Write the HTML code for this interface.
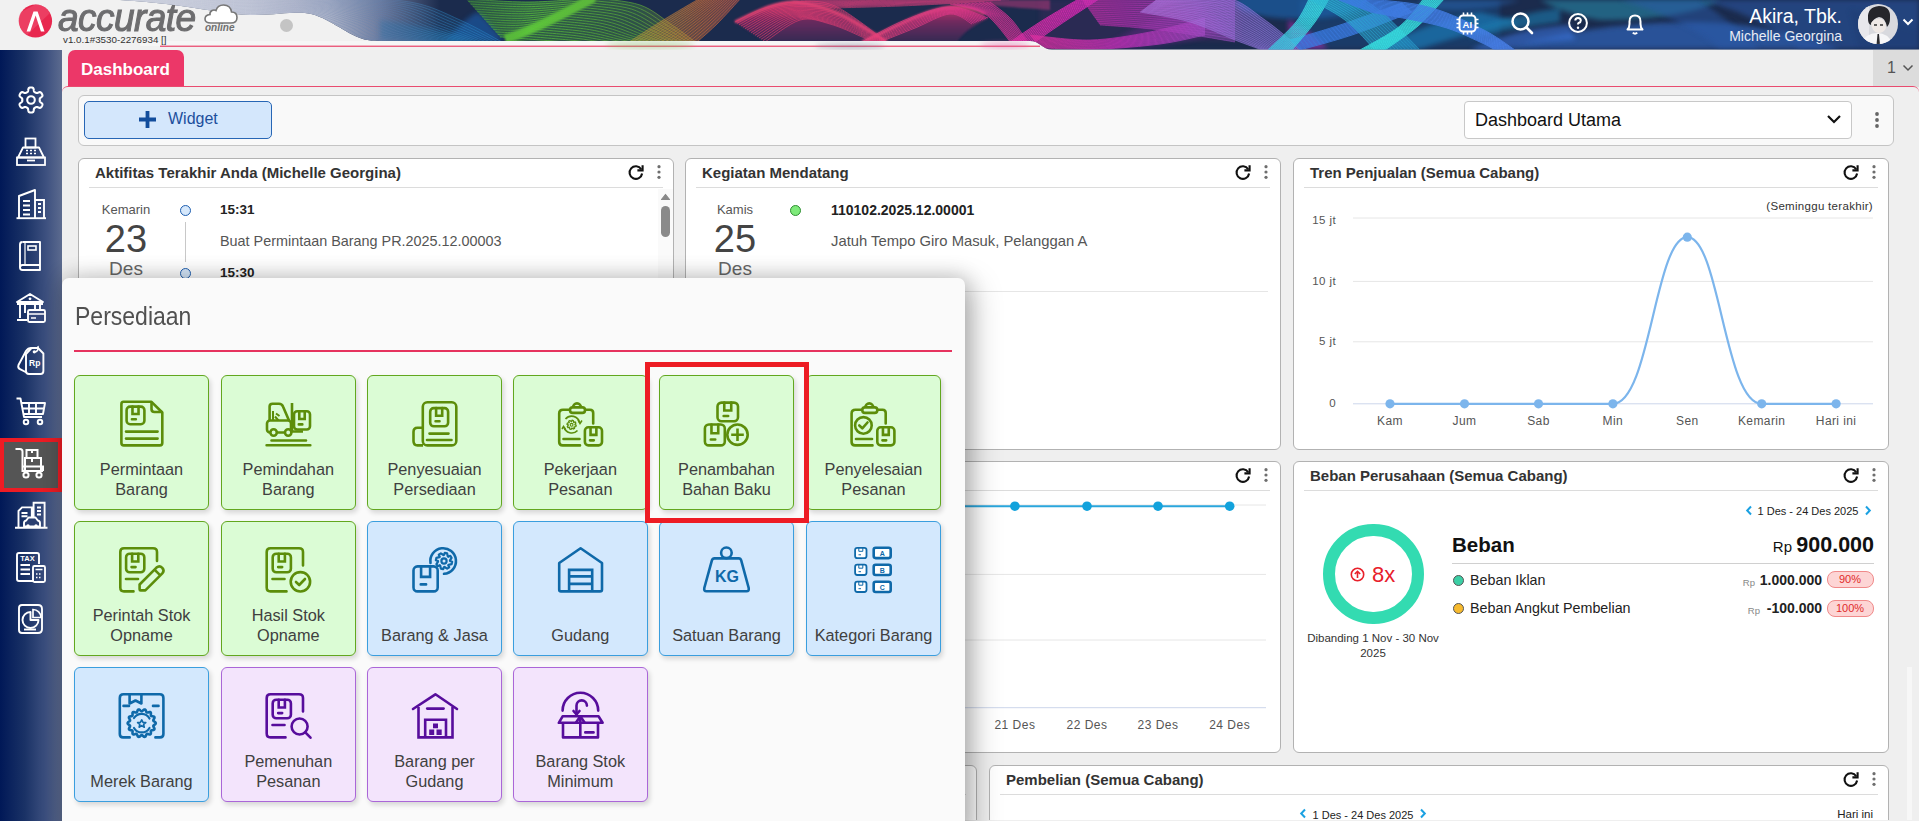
<!DOCTYPE html>
<html><head><meta charset="utf-8">
<style>
*{margin:0;padding:0;box-sizing:border-box}
html,body{width:1919px;height:821px;overflow:hidden;background:#efefef;font-family:"Liberation Sans",sans-serif;color:#333}
body{position:relative}
.a{position:absolute}
.t{white-space:nowrap;line-height:normal}
.card{position:absolute;background:#fff;border:1px solid #b2b2b2;border-radius:6px}
.tile{position:absolute;width:135px;height:135px;border-radius:6px;border:1px solid;box-shadow:2px 3px 5px rgba(0,0,0,.14)}
.tile.g{background:#dbfcd5;border-color:#62a71f}
.tile.b{background:#d3e8fd;border-color:#3a9ede}
.tile.p{background:#f3e4fc;border-color:#aa66d8}
.tl{position:absolute;left:0;right:0;text-align:center;font-size:16.3px;line-height:20px;color:#404040;white-space:nowrap}
</style></head><body>
<svg class="a" style="left:0;top:0" width="1919" height="50" viewBox="0 0 1919 50">
<defs><linearGradient id="lav" x1="120" y1="0" x2="440" y2="0" gradientUnits="userSpaceOnUse"><stop offset="0" stop-color="#eeeff3"/><stop offset="0.4" stop-color="#dcdfe8"/><stop offset="0.65" stop-color="#b3b9cc"/><stop offset="0.82" stop-color="#6c789a"/><stop offset="1" stop-color="#1b2b4d"/></linearGradient><linearGradient id="gA" x1="120" y1="0" x2="510" y2="0" gradientUnits="userSpaceOnUse"><stop offset="0" stop-color="#c0c5d5"/><stop offset="0.45" stop-color="#9aa3c0"/><stop offset="0.7" stop-color="#5a7aa8"/><stop offset="0.85" stop-color="#2a84c0"/><stop offset="1" stop-color="#2a8ad0"/></linearGradient><linearGradient id="gB" x1="450" y1="0" x2="720" y2="0" gradientUnits="userSpaceOnUse"><stop offset="0" stop-color="#3f8a3a"/><stop offset="0.3" stop-color="#5cc83a"/><stop offset="0.7" stop-color="#5aa83a"/><stop offset="1" stop-color="#b08a3a"/></linearGradient><linearGradient id="gC" x1="620" y1="0" x2="820" y2="0" gradientUnits="userSpaceOnUse"><stop offset="0" stop-color="#a8a03a"/><stop offset="0.4" stop-color="#d0703a"/><stop offset="1" stop-color="#e0406a"/></linearGradient><linearGradient id="gD" x1="720" y1="0" x2="920" y2="0" gradientUnits="userSpaceOnUse"><stop offset="0" stop-color="#e83a6a"/><stop offset="1" stop-color="#e0407a"/></linearGradient><linearGradient id="gE" x1="760" y1="0" x2="1060" y2="0" gradientUnits="userSpaceOnUse"><stop offset="0" stop-color="#d83a6e"/><stop offset="0.6" stop-color="#d8407a"/><stop offset="1" stop-color="#c03a90"/></linearGradient><linearGradient id="gF" x1="880" y1="0" x2="1020" y2="0" gradientUnits="userSpaceOnUse"><stop offset="0" stop-color="#e8407a"/><stop offset="1" stop-color="#d8309a"/></linearGradient><linearGradient id="gG" x1="990" y1="0" x2="1100" y2="0" gradientUnits="userSpaceOnUse"><stop offset="0" stop-color="#e030a0"/><stop offset="1" stop-color="#d028b8"/></linearGradient><linearGradient id="gH" x1="1030" y1="0" x2="1220" y2="0" gradientUnits="userSpaceOnUse"><stop offset="0" stop-color="#e030a0"/><stop offset="0.5" stop-color="#c030b8"/><stop offset="1" stop-color="#a050c8"/></linearGradient><linearGradient id="gI" x1="1170" y1="0" x2="1330" y2="0" gradientUnits="userSpaceOnUse"><stop offset="0" stop-color="#a870d8"/><stop offset="1" stop-color="#7a78e0"/></linearGradient><linearGradient id="gJ" x1="1260" y1="0" x2="1330" y2="0" gradientUnits="userSpaceOnUse"><stop offset="0" stop-color="#40c0e0"/><stop offset="1" stop-color="#38e0e0"/></linearGradient><linearGradient id="gK" x1="1300" y1="0" x2="1410" y2="0" gradientUnits="userSpaceOnUse"><stop offset="0" stop-color="#30c0d8"/><stop offset="1" stop-color="#2898c8"/></linearGradient><linearGradient id="gM" x1="1330" y1="0" x2="1520" y2="0" gradientUnits="userSpaceOnUse"><stop offset="0" stop-color="#3a7ae0"/><stop offset="1" stop-color="#4a80e8"/></linearGradient><linearGradient id="vh1" x1="0" y1="0" x2="0" y2="1"><stop offset="0" stop-color="#d83a70"/><stop offset=".45" stop-color="#7a2a62"/><stop offset="1" stop-color="#3a2a55"/></linearGradient><filter id="b1" x="-10%" y="-60%" width="120%" height="220%"><feGaussianBlur stdDeviation="1"/></filter><filter id="b2" x="-10%" y="-60%" width="120%" height="220%"><feGaussianBlur stdDeviation="2.5"/></filter><filter id="b3" x="-20%" y="-100%" width="140%" height="300%"><feGaussianBlur stdDeviation="4"/></filter><clipPath id="hc"><path d="M120 0C180 3 220 14 250 15C275 15 290 12 305 13C325 15 340 30 360 38C368 41 375 41 395 41L1030 41C1040 41 1042 49.5 1052 49.5L1919 49.5L1919 0Z"/></clipPath><clipPath id="hc2"><rect x="120" y="0" width="1799" height="50"/></clipPath></defs>
<rect x="0" y="0" width="1919" height="50" fill="#f1f1f1"/>
<rect x="140" y="41" width="900" height="5" fill="#f6f6f6"/>
<rect x="160" y="45.6" width="880" height="1.3" fill="#ea4f73"/>
<g clip-path="url(#hc)">
<rect x="120" y="0" width="1799" height="50" fill="#1b2b4d"/>
<rect x="120" y="0" width="320" height="50" fill="url(#lav)"/>
<path d="M445 41C458 28 468 16 478 12C488 20 496 32 505 41Z" fill="#1f60b0" opacity="0.6" filter="url(#b2)"/>
<path d="M380 41L380 20C420 25 450 32 480 41Z" fill="#246fa8" opacity="0.45" filter="url(#b2)"/>
<path d="M1040 0L1240 0L1240 41L1040 41Z" fill="#5a2a6a" opacity="0.25" filter="url(#b2)"/>
<path d="M1100 49C1130 30 1160 15 1200 5L1230 30C1200 40 1150 49 1100 49Z" fill="#6a2a8a" opacity="0.45" filter="url(#b2)"/>
<path d="M1300 0L1500 0L1500 49L1300 49Z" fill="#1f5a9a" opacity="0.35" filter="url(#b2)"/>
<path d="M1380 49C1400 35 1440 20 1480 12L1520 22C1480 30 1440 42 1420 49Z" fill="#1f8ac8" opacity="0.55" filter="url(#b2)"/>
<path d="M1420 0L1520 0C1490 10 1460 12 1420 8Z" fill="#2a6ab8" opacity="0.45" filter="url(#b2)"/>
<path d="M1470 30C1500 20 1530 12 1560 8L1560 22C1530 26 1500 32 1470 38Z" fill="#1a8ac0" opacity="0.5" filter="url(#b2)"/>
<path d="M1540 0L1720 0C1700 12 1660 20 1600 20C1570 15 1555 8 1540 0Z" fill="#2a9ab8" opacity="0.5" filter="url(#b2)"/>
<path d="M1500 49C1560 32 1620 22 1700 22C1760 24 1800 35 1840 49Z" fill="#3268c0" opacity="0.65" filter="url(#b2)"/>
<path d="M1620 0L1700 0C1720 15 1740 30 1760 49L1720 49C1700 30 1660 12 1620 0Z" fill="#2a5aa8" opacity="0.5" filter="url(#b2)"/>
<path d="M1700 0L1919 0L1919 49L1800 49C1780 30 1740 10 1700 0Z" fill="#2a55a0" opacity="0.6" filter="url(#b2)"/>
<path d="M1850 10C1880 15 1900 25 1919 30L1919 49L1860 49Z" fill="#1e3a70" opacity="0.4" filter="url(#b2)"/>
<path d="M505 39C530 32 560 15 594 -2" stroke="#62c83a" stroke-width="9" opacity=".9" fill="none" filter="url(#b1)"/>
<path d="M735 22C760 10 775 2 795 2C830 4 860 25 887 42L765 42C755 35 745 28 735 22Z" fill="url(#vh1)" opacity=".85" filter="url(#b1)"/>
<path d="M862 42C890 30 922 10 950 7C968 6 978 12 988 18C972 26 962 34 957 42Z" fill="url(#vh1)" opacity=".85" filter="url(#b1)"/>
<path d="M790 0L1050 0L1050 10C990 6 960 2 930 3C880 6 850 8 800 6Z" fill="#b03878" opacity=".55" filter="url(#b1)"/>
<path d="M735 22C760 10 775 2 795 2C830 4 860 25 887 42" stroke="#ee4a78" stroke-width="3" fill="none" opacity=".85" filter="url(#b1)"/>
<path d="M862 42C890 30 922 10 950 7C968 6 978 10 985 14" stroke="#ee4a80" stroke-width="3" fill="none" opacity=".85" filter="url(#b1)"/>
<ellipse cx="1300" cy="3" rx="65" ry="16" fill="#1a68b4" opacity=".6" filter="url(#b2)"/>
<path d="M1288 20C1300 25 1315 35 1328 49L1290 49Z" fill="#c02ab8" opacity=".55" filter="url(#b2)"/>
<path d="M1470 50C1500 35 1530 28 1570 25L1575 40C1540 42 1510 46 1500 50Z" fill="#3a72d8" opacity=".6" filter="url(#b2)"/>
<path d="M120.0 -3.0C140.0 -2.8 205.0 -2.2 240.0 -2.0C275.0 -1.8 301.7 -2.7 330.0 -2.0C358.3 -1.3 388.3 -1.7 410.0 2.0C431.7 5.7 444.7 13.3 460.0 20.0C475.3 26.7 495.0 38.3 502.0 42.0L420.0 42.0C410.8 41.7 378.3 42.3 365.0 40.0C351.7 37.7 350.8 32.5 340.0 28.0C329.2 23.5 316.7 15.3 300.0 13.0C283.3 10.7 270.0 15.7 240.0 14.0C210.0 12.3 140.0 4.8 120.0 3.0Z" fill="url(#gA)" opacity="0.15"/><g fill="none" stroke="url(#gA)" stroke-width="0.8" opacity="0.6"><path d="M120.0 -3.0C140.0 -2.8 205.0 -2.2 240.0 -2.0C275.0 -1.8 301.7 -2.7 330.0 -2.0C358.3 -1.3 388.3 -1.7 410.0 2.0C431.7 5.7 444.7 13.3 460.0 20.0C475.3 26.7 495.0 38.3 502.0 42.0"/><path d="M120.0 -2.7C140.0 -2.5 205.2 -1.5 240.0 -1.2C274.8 -1.0 300.8 -2.0 328.6 -1.3C356.3 -0.5 385.5 -0.5 406.7 3.2C427.8 6.9 440.2 14.5 455.5 21.0C470.7 27.4 491.0 38.5 498.1 42.0"/><path d="M120.0 -2.4C140.0 -2.1 205.5 -0.8 240.0 -0.5C274.5 -0.2 299.9 -1.4 327.1 -0.6C354.4 0.3 382.7 0.7 403.3 4.5C424.0 8.2 435.8 15.7 451.0 21.9C466.1 28.2 487.0 38.7 494.2 42.0"/><path d="M120.0 -2.1C140.0 -1.7 205.7 -0.1 240.0 0.3C274.3 0.7 299.0 -0.8 325.7 0.1C352.4 1.0 379.9 1.9 400.0 5.7C420.1 9.5 431.4 16.8 446.4 22.9C461.5 28.9 483.0 38.8 490.3 42.0"/><path d="M120.0 -1.9C140.0 -1.4 206.0 0.6 240.0 1.0C274.0 1.5 298.2 -0.1 324.3 0.9C350.4 1.8 377.1 3.1 396.7 7.0C416.3 10.8 427.0 18.0 441.9 23.8C456.9 29.7 479.0 39.0 486.4 42.0"/><path d="M120.0 -1.6C140.0 -1.0 206.2 1.3 240.0 1.8C273.8 2.3 297.3 0.5 322.9 1.6C348.4 2.6 374.2 4.3 393.3 8.2C412.4 12.1 422.5 19.1 437.4 24.8C452.2 30.4 475.0 39.1 482.5 42.0"/><path d="M120.0 -1.3C140.0 -0.6 206.4 2.0 240.0 2.6C273.6 3.2 296.4 1.1 321.4 2.3C346.4 3.4 371.4 5.5 390.0 9.4C408.6 13.3 418.1 20.3 432.9 25.7C447.6 31.1 471.0 39.3 478.6 42.0"/><path d="M120.0 -1.0C140.0 -0.3 206.7 2.7 240.0 3.3C273.3 4.0 295.6 1.8 320.0 3.0C344.4 4.2 368.6 6.7 386.7 10.7C404.7 14.6 413.7 21.4 428.3 26.7C443.0 31.9 466.9 39.4 474.7 42.0"/><path d="M120.0 -0.7C140.0 0.1 206.9 3.4 240.0 4.1C273.1 4.8 294.7 2.4 318.6 3.7C342.5 5.0 365.8 7.9 383.3 11.9C400.9 15.9 409.2 22.6 423.8 27.6C438.4 32.6 462.9 39.6 470.8 42.0"/><path d="M120.0 -0.4C140.0 0.5 207.1 4.0 240.0 4.9C272.9 5.7 293.8 3.0 317.1 4.4C340.5 5.8 363.0 9.1 380.0 13.1C397.0 17.2 404.8 23.8 419.3 28.6C433.8 33.4 458.9 39.8 466.9 42.0"/><path d="M120.0 -0.1C140.0 0.8 207.4 4.7 240.0 5.6C272.6 6.5 292.9 3.7 315.7 5.1C338.5 6.6 360.2 10.3 376.7 14.4C393.2 18.4 400.4 24.9 414.8 29.5C429.1 34.1 454.9 39.9 463.0 42.0"/><path d="M120.0 0.1C140.0 1.2 207.6 5.4 240.0 6.4C272.4 7.3 292.1 4.3 314.3 5.9C336.5 7.4 357.3 11.5 373.3 15.6C389.3 19.7 396.0 26.1 410.2 30.5C424.5 34.9 450.9 40.1 459.0 42.0"/><path d="M120.0 0.4C140.0 1.5 207.9 6.1 240.0 7.1C272.1 8.2 291.2 5.0 312.9 6.6C334.5 8.2 354.5 12.7 370.0 16.9C385.5 21.0 391.5 27.2 405.7 31.4C419.9 35.6 446.9 40.2 455.1 42.0"/><path d="M120.0 0.7C140.0 1.9 208.1 6.8 240.0 7.9C271.9 9.0 290.3 5.6 311.4 7.3C332.5 9.0 351.7 13.9 366.7 18.1C381.6 22.3 387.1 28.4 401.2 32.4C415.3 36.4 442.9 40.4 451.2 42.0"/><path d="M120.0 1.0C140.0 2.3 208.3 7.5 240.0 8.7C271.7 9.8 289.4 6.2 310.0 8.0C330.6 9.8 348.9 15.1 363.3 19.3C377.8 23.6 382.7 29.6 396.7 33.3C410.7 37.1 438.9 40.6 447.3 42.0"/><path d="M120.0 1.3C140.0 2.6 208.6 8.2 240.0 9.4C271.4 10.7 288.6 6.9 308.6 8.7C328.6 10.6 346.1 16.3 360.0 20.6C373.9 24.8 378.2 30.7 392.1 34.3C406.0 37.9 434.9 40.7 443.4 42.0"/><path d="M120.0 1.6C140.0 3.0 208.8 8.9 240.0 10.2C271.2 11.5 287.7 7.5 307.1 9.4C326.6 11.4 343.3 17.5 356.7 21.8C370.1 26.1 373.8 31.9 387.6 35.2C401.4 38.6 430.9 40.9 439.5 42.0"/><path d="M120.0 1.9C140.0 3.4 209.0 9.6 240.0 11.0C271.0 12.3 286.8 8.1 305.7 10.1C324.6 12.2 340.4 18.7 353.3 23.0C366.2 27.4 369.4 33.0 383.1 36.2C396.8 39.3 426.9 41.0 435.6 42.0"/><path d="M120.0 2.1C140.0 3.7 209.3 10.3 240.0 11.7C270.7 13.2 286.0 8.8 304.3 10.9C322.6 13.0 337.6 19.9 350.0 24.3C362.4 28.7 365.0 34.2 378.6 37.1C392.2 40.1 422.9 41.2 431.7 42.0"/><path d="M120.0 2.4C140.0 4.1 209.5 11.0 240.0 12.5C270.5 14.0 285.1 9.4 302.9 11.6C320.6 13.7 334.8 21.1 346.7 25.5C358.5 29.9 360.5 35.3 374.0 38.1C387.6 40.8 418.8 41.3 427.8 42.0"/><path d="M120.0 2.7C140.0 4.5 209.8 11.6 240.0 13.2C270.2 14.8 284.2 10.0 301.4 12.3C318.7 14.5 332.0 22.3 343.3 26.8C354.7 31.2 356.1 36.5 369.5 39.0C383.0 41.6 414.8 41.5 423.9 42.0"/><path d="M120.0 3.0C140.0 4.8 210.0 12.3 240.0 14.0C270.0 15.7 283.3 10.7 300.0 13.0C316.7 15.3 329.2 23.5 340.0 28.0C350.8 32.5 351.7 37.7 365.0 40.0C378.3 42.3 410.8 41.7 420.0 42.0"/></g>
<path d="M466.0 -1.0C476.7 -0.5 508.7 2.2 530.0 2.0C551.3 1.8 583.3 -1.3 594.0 -2.0L528.0 32.0C525.7 32.8 518.7 36.2 514.0 37.0C509.3 37.8 502.3 37.0 500.0 37.0Z" fill="url(#gB)" opacity="0.35"/><g fill="none" stroke="url(#gB)" stroke-width="0.9" opacity="0.75"><path d="M466.0 -1.0C476.7 -0.5 508.7 2.2 530.0 2.0C551.3 1.8 583.3 -1.3 594.0 -2.0"/><path d="M468.3 1.5C478.4 2.0 508.7 4.5 528.9 4.3C549.2 4.1 579.5 0.9 589.6 0.3"/><path d="M470.5 4.1C480.1 4.5 508.8 6.9 527.9 6.7C547.0 6.4 575.6 3.2 585.2 2.5"/><path d="M472.8 6.6C481.8 7.0 508.8 9.3 526.8 9.0C544.8 8.7 571.8 5.5 580.8 4.8"/><path d="M475.1 9.1C483.5 9.5 508.8 11.7 525.7 11.3C542.6 11.0 568.0 7.8 576.4 7.1"/><path d="M477.3 11.7C485.2 12.0 508.9 14.1 524.7 13.7C540.4 13.3 564.1 10.1 572.0 9.3"/><path d="M479.6 14.2C486.9 14.5 508.9 16.4 523.6 16.0C538.3 15.6 560.3 12.3 567.6 11.6"/><path d="M481.9 16.7C488.6 17.0 509.0 18.8 522.5 18.3C536.1 17.9 556.4 14.6 563.2 13.9"/><path d="M484.1 19.3C490.4 19.5 509.0 21.2 521.5 20.7C533.9 20.1 552.6 16.9 558.8 16.1"/><path d="M486.4 21.8C492.1 22.0 509.1 23.6 520.4 23.0C531.7 22.4 548.7 19.2 554.4 18.4"/><path d="M488.7 24.3C493.8 24.5 509.1 25.9 519.3 25.3C529.6 24.7 544.9 21.4 550.0 20.7"/><path d="M490.9 26.9C495.5 27.0 509.2 28.3 518.3 27.7C527.4 27.0 541.0 23.7 545.6 22.9"/><path d="M493.2 29.4C497.2 29.5 509.2 30.7 517.2 30.0C525.2 29.3 537.2 26.0 541.2 25.2"/><path d="M495.5 31.9C498.9 32.0 509.2 33.1 516.1 32.3C523.0 31.6 533.4 28.3 536.8 27.5"/><path d="M497.7 34.5C500.6 34.5 509.3 35.5 515.1 34.7C520.8 33.9 529.5 30.6 532.4 29.7"/><path d="M500.0 37.0C502.3 37.0 509.3 37.8 514.0 37.0C518.7 36.2 525.7 32.8 528.0 32.0"/></g>
<path d="M594.0 -2.0C601.7 -0.8 627.0 0.5 640.0 5.0C653.0 9.5 661.7 18.0 672.0 25.0C682.3 32.0 697.0 43.3 702.0 47.0L640.0 49.0C633.3 48.7 613.3 47.8 600.0 47.0C586.7 46.2 575.3 45.2 560.0 44.0C544.7 42.8 516.7 40.7 508.0 40.0Z" fill="url(#gB)" opacity="0.3"/><g fill="none" stroke="url(#gB)" stroke-width="0.9" opacity="0.75"><path d="M594.0 -2.0C601.7 -0.8 627.0 0.5 640.0 5.0C653.0 9.5 661.7 18.0 672.0 25.0C682.3 32.0 697.0 43.3 702.0 47.0"/><path d="M589.5 0.2C597.2 1.4 622.7 2.7 635.8 7.1C648.9 11.4 657.7 19.5 668.2 26.2C678.7 32.8 693.6 43.6 698.7 47.1"/><path d="M584.9 2.4C592.7 3.5 618.3 5.0 631.6 9.1C644.8 13.3 653.8 21.0 664.4 27.3C675.1 33.7 690.3 43.9 695.5 47.2"/><path d="M580.4 4.6C588.2 5.7 614.0 7.2 627.4 11.2C640.7 15.1 649.8 22.4 660.6 28.5C671.4 34.5 686.9 44.2 692.2 47.3"/><path d="M575.9 6.8C583.8 7.9 609.7 9.4 623.2 13.2C636.6 17.0 645.9 23.9 656.8 29.6C667.8 35.3 683.6 44.5 688.9 47.4"/><path d="M571.4 9.1C579.3 10.1 605.3 11.6 618.9 15.3C632.6 18.9 641.9 25.4 653.1 30.8C664.2 36.2 680.2 44.7 685.7 47.5"/><path d="M566.8 11.3C574.8 12.3 601.0 13.9 614.7 17.3C628.5 20.8 638.0 26.9 649.3 31.9C660.5 37.0 676.9 45.0 682.4 47.6"/><path d="M562.3 13.5C570.4 14.5 596.7 16.1 610.5 19.4C624.4 22.6 634.0 28.4 645.5 33.1C656.9 37.8 673.5 45.3 679.2 47.7"/><path d="M557.8 15.7C565.9 16.6 592.3 18.3 606.3 21.4C620.3 24.5 630.1 29.9 641.7 34.3C653.3 38.7 670.2 45.6 675.9 47.8"/><path d="M553.3 17.9C561.4 18.8 588.0 20.6 602.1 23.5C616.2 26.4 626.1 31.3 637.9 35.4C649.6 39.5 666.8 45.9 672.6 47.9"/><path d="M548.7 20.1C556.9 21.0 583.7 22.8 597.9 25.5C612.1 28.3 622.2 32.8 634.1 36.6C646.0 40.3 663.5 46.1 669.4 48.1"/><path d="M544.2 22.3C552.5 23.2 579.3 25.0 593.7 27.6C608.0 30.1 618.2 34.3 630.3 37.7C642.4 41.2 660.1 46.4 666.1 48.2"/><path d="M539.7 24.5C548.0 25.4 575.0 27.2 589.5 29.6C603.9 32.0 614.3 35.8 626.5 38.9C638.8 42.0 656.8 46.7 662.8 48.3"/><path d="M535.2 26.7C543.5 27.6 570.7 29.5 585.3 31.7C599.9 33.9 610.4 37.3 622.7 40.1C635.1 42.8 653.4 47.0 659.6 48.4"/><path d="M530.6 28.9C539.0 29.7 566.3 31.7 581.1 33.7C595.8 35.8 606.4 38.8 618.9 41.2C631.5 43.7 650.1 47.3 656.3 48.5"/><path d="M526.1 31.2C534.6 31.9 562.0 33.9 576.8 35.8C591.7 37.7 602.5 40.2 615.2 42.4C627.9 44.5 646.7 47.5 653.1 48.6"/><path d="M521.6 33.4C530.1 34.1 557.7 36.1 572.6 37.8C587.6 39.5 598.5 41.7 611.4 43.5C624.2 45.3 643.4 47.8 649.8 48.7"/><path d="M517.1 35.6C525.6 36.3 553.3 38.4 568.4 39.9C583.5 41.4 594.6 43.2 607.6 44.7C620.6 46.2 640.0 48.1 646.5 48.8"/><path d="M512.5 37.8C521.1 38.5 549.0 40.6 564.2 41.9C579.4 43.3 590.6 44.7 603.8 45.8C617.0 47.0 636.7 48.4 643.3 48.9"/><path d="M508.0 40.0C516.7 40.7 544.7 42.8 560.0 44.0C575.3 45.2 586.7 46.2 600.0 47.0C613.3 47.8 633.3 48.7 640.0 49.0"/></g>
<path d="M620.0 48.0C626.7 43.7 646.3 30.5 660.0 22.0C673.7 13.5 695.0 1.2 702.0 -3.0L742.0 -3.0C737.7 1.7 724.7 16.5 716.0 25.0C707.3 33.5 694.3 44.2 690.0 48.0Z" fill="url(#gC)" opacity="0.4"/><g fill="none" stroke="url(#gC)" stroke-width="0.8" opacity="0.7"><path d="M620.0 48.0C626.7 43.7 646.3 30.5 660.0 22.0C673.7 13.5 695.0 1.2 702.0 -3.0"/><path d="M624.1 48.0C630.6 43.7 649.9 30.7 663.3 22.2C676.7 13.7 697.5 1.2 704.4 -3.0"/><path d="M628.2 48.0C634.6 43.7 653.5 30.9 666.6 22.4C679.7 13.9 700.0 1.2 706.7 -3.0"/><path d="M632.4 48.0C638.6 43.8 657.1 31.0 669.9 22.5C682.7 14.0 702.5 1.3 709.1 -3.0"/><path d="M636.5 48.0C642.6 43.8 660.7 31.2 673.2 22.7C685.7 14.2 705.0 1.3 711.4 -3.0"/><path d="M640.6 48.0C646.6 43.8 664.3 31.4 676.5 22.9C688.7 14.4 707.5 1.3 713.8 -3.0"/><path d="M644.7 48.0C650.5 43.8 667.9 31.6 679.8 23.1C691.7 14.6 710.1 1.3 716.1 -3.0"/><path d="M648.8 48.0C654.5 43.9 671.5 31.7 683.1 23.2C694.7 14.7 712.6 1.4 718.5 -3.0"/><path d="M652.9 48.0C658.5 43.9 675.0 31.9 686.4 23.4C697.7 14.9 715.1 1.4 720.8 -3.0"/><path d="M657.1 48.0C662.5 43.9 678.6 32.1 689.6 23.6C700.7 15.1 717.6 1.4 723.2 -3.0"/><path d="M661.2 48.0C666.5 44.0 682.2 32.3 692.9 23.8C703.7 15.3 720.1 1.5 725.5 -3.0"/><path d="M665.3 48.0C670.5 44.0 685.8 32.4 696.2 23.9C706.7 15.4 722.6 1.5 727.9 -3.0"/><path d="M669.4 48.0C674.4 44.0 689.4 32.6 699.5 24.1C709.7 15.6 725.1 1.5 730.2 -3.0"/><path d="M673.5 48.0C678.4 44.0 693.0 32.8 702.8 24.3C712.7 15.8 727.6 1.5 732.6 -3.0"/><path d="M677.6 48.0C682.4 44.1 696.6 33.0 706.1 24.5C715.7 16.0 730.1 1.6 734.9 -3.0"/><path d="M681.8 48.0C686.4 44.1 700.2 33.1 709.4 24.6C718.7 16.1 732.6 1.6 737.3 -3.0"/><path d="M685.9 48.0C690.4 44.1 703.7 33.3 712.7 24.8C721.7 16.3 735.2 1.6 739.6 -3.0"/><path d="M690.0 48.0C694.3 44.2 707.3 33.5 716.0 25.0C724.7 16.5 737.7 1.7 742.0 -3.0"/></g>
<g fill="none" stroke="url(#gD)" stroke-width="0.8" opacity="0.8"><path d="M735.0 22.0C739.5 19.8 752.0 12.3 762.0 9.0C772.0 5.7 782.8 2.5 795.0 2.0C807.2 1.5 819.7 -0.7 835.0 6.0C850.3 12.7 878.3 36.0 887.0 42.0"/><path d="M737.0 23.3C741.6 21.1 754.5 13.0 764.5 9.7C774.6 6.4 785.3 3.8 797.3 3.5C809.4 3.2 821.9 1.6 836.7 8.0C851.4 14.4 877.7 36.3 885.9 42.0"/><path d="M739.0 24.7C743.7 22.3 757.0 13.8 767.1 10.5C777.2 7.2 787.8 5.0 799.7 4.9C811.5 4.9 824.2 3.8 838.3 10.0C852.5 16.2 877.0 36.7 884.7 42.0"/><path d="M741.0 26.0C745.8 23.5 759.4 14.5 769.6 11.2C779.8 7.9 790.3 6.3 802.0 6.4C813.7 6.5 826.4 6.1 840.0 12.0C853.6 17.9 876.3 37.0 883.6 42.0"/><path d="M743.0 27.3C747.9 24.8 761.9 15.2 772.1 11.9C782.4 8.7 792.7 7.5 804.3 7.9C815.9 8.2 828.6 8.3 841.7 14.0C854.7 19.7 875.7 37.3 882.5 42.0"/><path d="M745.0 28.7C749.9 26.0 764.4 15.9 774.7 12.7C784.9 9.4 795.2 8.8 806.7 9.3C818.1 9.9 830.9 10.6 843.3 16.0C855.8 21.4 875.0 37.7 881.3 42.0"/><path d="M747.0 30.0C752.0 27.2 766.9 16.6 777.2 13.4C787.5 10.2 797.7 10.0 809.0 10.8C820.3 11.6 833.1 12.8 845.0 18.0C856.9 23.2 874.3 38.0 880.2 42.0"/><path d="M749.0 31.3C754.1 28.5 769.3 17.3 779.7 14.1C790.1 11.0 800.2 11.3 811.3 12.3C822.5 13.2 835.4 15.0 846.7 20.0C858.0 25.0 873.7 38.3 879.1 42.0"/><path d="M751.0 32.7C756.2 29.7 771.8 18.0 782.3 14.9C792.7 11.7 802.7 12.5 813.7 13.7C824.7 14.9 837.6 17.3 848.3 22.0C859.0 26.7 873.0 38.7 877.9 42.0"/><path d="M753.0 34.0C758.3 30.9 774.3 18.7 784.8 15.6C795.3 12.5 805.1 13.8 816.0 15.2C826.9 16.6 839.9 19.5 850.0 24.0C860.1 28.5 872.3 39.0 876.8 42.0"/><path d="M755.0 35.3C760.4 32.2 776.8 19.4 787.3 16.3C797.9 13.2 807.6 15.1 818.3 16.7C829.1 18.3 842.1 21.8 851.7 26.0C861.2 30.2 871.7 39.3 875.7 42.0"/><path d="M757.0 36.7C762.5 33.4 779.3 20.2 789.9 17.1C800.5 14.0 810.1 16.3 820.7 18.1C831.2 20.0 844.4 24.0 853.3 28.0C862.3 32.0 871.0 39.7 874.5 42.0"/><path d="M759.0 38.0C764.6 34.6 781.7 20.9 792.4 17.8C803.1 14.7 812.6 17.6 823.0 19.6C833.4 21.6 846.6 26.3 855.0 30.0C863.4 33.7 870.3 40.0 873.4 42.0"/><path d="M761.0 39.3C766.7 35.9 784.2 21.6 794.9 18.5C805.7 15.5 815.0 18.8 825.3 21.1C835.6 23.3 848.8 28.5 856.7 32.0C864.5 35.5 869.7 40.3 872.3 42.0"/><path d="M763.0 40.7C768.7 37.1 786.7 22.3 797.5 19.3C808.2 16.2 817.5 20.1 827.7 22.5C837.8 25.0 851.1 30.8 858.3 34.0C865.6 37.2 869.0 40.7 871.1 42.0"/><path d="M765.0 42.0C770.8 38.3 789.2 23.0 800.0 20.0C810.8 17.0 820.0 21.3 830.0 24.0C840.0 26.7 853.3 33.0 860.0 36.0C866.7 39.0 868.3 41.0 870.0 42.0"/></g>
<g fill="none" stroke="url(#gF)" stroke-width="0.9" opacity="0.8"><path d="M862.0 42.0C869.2 38.3 890.3 25.8 905.0 20.0C919.7 14.2 936.2 7.3 950.0 7.0C963.8 6.7 981.7 16.2 988.0 18.0"/><path d="M864.0 42.0C871.0 38.5 891.8 26.6 906.1 20.9C920.4 15.2 936.6 8.1 950.0 7.8C963.4 7.4 980.2 16.9 986.2 18.7"/><path d="M866.0 42.0C872.9 38.6 893.2 27.4 907.2 21.8C921.2 16.2 937.1 9.0 950.0 8.6C962.9 8.1 978.7 17.5 984.4 19.3"/><path d="M868.0 42.0C874.7 38.8 894.7 28.1 908.3 22.7C922.0 17.2 937.6 9.8 950.0 9.3C962.4 8.9 977.2 18.2 982.7 20.0"/><path d="M870.0 42.0C876.6 38.9 896.1 28.9 909.4 23.6C922.8 18.2 938.1 10.6 950.0 10.1C961.9 9.6 975.7 18.9 980.9 20.7"/><path d="M872.0 42.0C878.4 39.1 897.6 29.6 910.6 24.4C923.6 19.3 938.6 11.4 950.0 10.9C961.4 10.4 974.3 19.6 979.1 21.3"/><path d="M874.0 42.0C880.3 39.2 899.0 30.4 911.7 25.3C924.3 20.3 939.1 12.2 950.0 11.7C960.9 11.1 972.8 20.3 977.3 22.0"/><path d="M876.0 42.0C882.1 39.4 900.4 31.1 912.8 26.2C925.1 21.3 939.5 13.0 950.0 12.4C960.5 11.9 971.3 21.0 975.6 22.7"/><path d="M878.0 42.0C884.0 39.5 901.9 31.9 913.9 27.1C925.9 22.3 940.0 13.9 950.0 13.2C960.0 12.6 969.8 21.6 973.8 23.3"/><path d="M880.0 42.0C885.8 39.7 903.3 32.7 915.0 28.0C926.7 23.3 940.5 14.7 950.0 14.0C959.5 13.3 968.3 22.3 972.0 24.0"/></g>
<path d="M950.0 4.0C955.8 5.7 974.7 7.3 985.0 14.0C995.3 20.7 1007.5 39.0 1012.0 44.0L1032.0 49.0C1028.7 44.2 1019.0 27.8 1012.0 20.0C1005.0 12.2 993.7 5.0 990.0 2.0Z" fill="url(#gF)" opacity="0.4"/><g fill="none" stroke="url(#gF)" stroke-width="0.9" opacity="0.75"><path d="M950.0 4.0C955.8 5.7 974.7 7.3 985.0 14.0C995.3 20.7 1007.5 39.0 1012.0 44.0"/><path d="M953.6 3.8C959.3 5.6 977.4 7.8 987.5 14.5C997.5 21.3 1009.4 39.5 1013.8 44.5"/><path d="M957.3 3.6C962.7 5.5 980.2 8.2 989.9 15.1C999.6 22.0 1011.3 39.9 1015.6 44.9"/><path d="M960.9 3.5C966.2 5.5 982.9 8.7 992.4 15.6C1001.8 22.6 1013.3 40.4 1017.5 45.4"/><path d="M964.5 3.3C969.6 5.4 985.7 9.1 994.8 16.2C1003.9 23.3 1015.2 40.9 1019.3 45.8"/><path d="M968.2 3.1C973.0 5.4 988.5 9.5 997.3 16.7C1006.1 23.9 1017.1 41.3 1021.1 46.3"/><path d="M971.8 2.9C976.5 5.3 991.2 10.0 999.7 17.3C1008.2 24.6 1019.0 41.8 1022.9 46.7"/><path d="M975.5 2.7C979.9 5.2 994.0 10.4 1002.2 17.8C1010.4 25.2 1021.0 42.3 1024.7 47.2"/><path d="M979.1 2.5C983.3 5.2 996.7 10.8 1004.6 18.4C1012.5 25.9 1022.9 42.8 1026.5 47.6"/><path d="M982.7 2.4C986.8 5.1 999.5 11.3 1007.1 18.9C1014.7 26.5 1024.8 43.2 1028.4 48.1"/><path d="M986.4 2.2C990.2 5.1 1002.2 11.7 1009.5 19.5C1016.8 27.2 1026.7 43.7 1030.2 48.5"/><path d="M990.0 2.0C993.7 5.0 1005.0 12.2 1012.0 20.0C1019.0 27.8 1028.7 44.2 1032.0 49.0"/></g>
<g fill="none" stroke="url(#gE)" stroke-width="0.9" opacity="0.65"><path d="M790.0 -3.0C808.3 -3.0 856.7 -3.0 900.0 -3.0C943.3 -3.0 1025.0 -3.0 1050.0 -3.0"/><path d="M793.6 -2.0C811.4 -2.0 858.6 -2.1 900.0 -2.2C941.4 -2.3 1018.2 -2.4 1041.8 -2.5"/><path d="M797.3 -1.0C814.4 -1.1 860.6 -1.2 900.0 -1.4C939.4 -1.5 1011.4 -1.8 1033.6 -1.9"/><path d="M800.9 0.0C817.4 -0.1 862.6 -0.3 900.0 -0.5C937.4 -0.8 1004.5 -1.2 1025.5 -1.4"/><path d="M804.5 1.0C820.5 0.9 864.5 0.6 900.0 0.3C935.5 -0.0 997.7 -0.6 1017.3 -0.8"/><path d="M808.2 2.0C823.5 1.8 866.5 1.5 900.0 1.1C933.5 0.7 990.9 -0.0 1009.1 -0.3"/><path d="M811.8 3.0C826.5 2.8 868.5 2.4 900.0 1.9C931.5 1.5 984.1 0.5 1000.9 0.3"/><path d="M815.5 4.0C829.5 3.8 870.5 3.3 900.0 2.7C929.5 2.2 977.3 1.1 992.7 0.8"/><path d="M819.1 5.0C832.6 4.8 872.4 4.2 900.0 3.5C927.6 2.9 970.5 1.7 984.5 1.4"/><path d="M822.7 6.0C835.6 5.7 874.4 5.0 900.0 4.4C925.6 3.7 963.6 2.3 976.4 1.9"/><path d="M826.4 7.0C838.6 6.7 876.4 5.9 900.0 5.2C923.6 4.4 956.8 2.9 968.2 2.5"/><path d="M830.0 8.0C841.7 7.7 878.3 6.8 900.0 6.0C921.7 5.2 950.0 3.5 960.0 3.0"/></g>
<path d="M1000.0 49.0C1006.7 44.5 1026.3 30.7 1040.0 22.0C1053.7 13.3 1075.0 1.2 1082.0 -3.0L1102.0 -3.0C1094.7 1.8 1070.8 17.3 1058.0 26.0C1045.2 34.7 1030.5 45.2 1025.0 49.0Z" fill="url(#gG)" opacity="0.4"/><g fill="none" stroke="url(#gG)" stroke-width="1" opacity="0.85"><path d="M1000.0 49.0C1006.7 44.5 1026.3 30.7 1040.0 22.0C1053.7 13.3 1075.0 1.2 1082.0 -3.0"/><path d="M1002.3 49.0C1008.8 44.6 1028.0 31.0 1041.6 22.4C1055.2 13.7 1076.8 1.2 1083.8 -3.0"/><path d="M1004.5 49.0C1011.0 44.6 1029.8 31.4 1043.3 22.7C1056.8 14.1 1078.6 1.3 1085.6 -3.0"/><path d="M1006.8 49.0C1013.2 44.7 1031.5 31.8 1044.9 23.1C1058.3 14.4 1080.4 1.3 1087.5 -3.0"/><path d="M1009.1 49.0C1015.3 44.7 1033.2 32.1 1046.5 23.5C1059.9 14.8 1082.2 1.4 1089.3 -3.0"/><path d="M1011.4 49.0C1017.5 44.8 1034.9 32.5 1048.2 23.8C1061.5 15.2 1083.9 1.5 1091.1 -3.0"/><path d="M1013.6 49.0C1019.7 44.9 1036.6 32.8 1049.8 24.2C1063.0 15.5 1085.7 1.5 1092.9 -3.0"/><path d="M1015.9 49.0C1021.8 44.9 1038.3 33.2 1051.5 24.5C1064.6 15.9 1087.5 1.6 1094.7 -3.0"/><path d="M1018.2 49.0C1024.0 45.0 1040.0 33.6 1053.1 24.9C1066.2 16.2 1089.3 1.7 1096.5 -3.0"/><path d="M1020.5 49.0C1026.2 45.0 1041.7 33.9 1054.7 25.3C1067.7 16.6 1091.1 1.7 1098.4 -3.0"/><path d="M1022.7 49.0C1028.3 45.1 1043.5 34.3 1056.4 25.6C1069.3 17.0 1092.9 1.8 1100.2 -3.0"/><path d="M1025.0 49.0C1030.5 45.2 1045.2 34.7 1058.0 26.0C1070.8 17.3 1094.7 1.8 1102.0 -3.0"/></g>
<path d="M1030.0 35.0C1040.0 35.8 1070.0 40.5 1090.0 40.0C1110.0 39.5 1130.8 35.7 1150.0 32.0C1169.2 28.3 1195.8 20.3 1205.0 18.0L1205.0 35.0C1197.5 36.5 1177.5 41.7 1160.0 44.0C1142.5 46.3 1120.0 48.3 1100.0 49.0C1080.0 49.7 1050.0 48.2 1040.0 48.0Z" fill="url(#gH)" opacity="0.35"/><g fill="none" stroke="url(#gH)" stroke-width="0.9" opacity="0.75"><path d="M1030.0 35.0C1040.0 35.8 1070.0 40.5 1090.0 40.0C1110.0 39.5 1130.8 35.7 1150.0 32.0C1169.2 28.3 1195.8 20.3 1205.0 18.0"/><path d="M1030.8 36.0C1040.8 36.8 1070.8 41.2 1090.8 40.7C1110.8 40.2 1131.7 36.5 1150.8 32.9C1169.8 29.4 1196.0 21.6 1205.0 19.3"/><path d="M1031.5 37.0C1041.5 37.7 1071.5 41.9 1091.5 41.4C1111.5 40.9 1132.6 37.3 1151.5 33.8C1170.4 30.4 1196.1 22.8 1205.0 20.6"/><path d="M1032.3 38.0C1042.3 38.7 1072.3 42.6 1092.3 42.1C1112.3 41.5 1133.5 38.1 1152.3 34.8C1171.1 31.4 1196.2 24.1 1205.0 21.9"/><path d="M1033.1 39.0C1043.1 39.6 1073.1 43.3 1093.1 42.8C1113.1 42.2 1134.4 38.9 1153.1 35.7C1171.7 32.4 1196.3 25.3 1205.0 23.2"/><path d="M1033.8 40.0C1043.8 40.6 1073.8 44.0 1093.8 43.5C1113.8 42.9 1135.3 39.8 1153.8 36.6C1172.4 33.5 1196.5 26.6 1205.0 24.5"/><path d="M1034.6 41.0C1044.6 41.5 1074.6 44.7 1094.6 44.2C1114.6 43.6 1136.2 40.6 1154.6 37.5C1173.0 34.5 1196.6 27.8 1205.0 25.8"/><path d="M1035.4 42.0C1045.4 42.5 1075.4 45.4 1095.4 44.8C1115.4 44.3 1137.1 41.4 1155.4 38.5C1173.7 35.5 1196.7 29.0 1205.0 27.2"/><path d="M1036.2 43.0C1046.2 43.4 1076.2 46.1 1096.2 45.5C1116.2 44.9 1138.0 42.2 1156.2 39.4C1174.3 36.5 1196.9 30.3 1205.0 28.5"/><path d="M1036.9 44.0C1046.9 44.4 1076.9 46.8 1096.9 46.2C1116.9 45.6 1138.9 43.1 1156.9 40.3C1174.9 37.6 1197.0 31.5 1205.0 29.8"/><path d="M1037.7 45.0C1047.7 45.3 1077.7 47.6 1097.7 46.9C1117.7 46.3 1139.8 43.9 1157.7 41.2C1175.6 38.6 1197.1 32.8 1205.0 31.1"/><path d="M1038.5 46.0C1048.5 46.3 1078.5 48.3 1098.5 47.6C1118.5 47.0 1140.7 44.7 1158.5 42.2C1176.2 39.6 1197.2 34.0 1205.0 32.4"/><path d="M1039.2 47.0C1049.2 47.2 1079.2 49.0 1099.2 48.3C1119.2 47.7 1141.6 45.5 1159.2 43.1C1176.9 40.6 1197.4 35.3 1205.0 33.7"/><path d="M1040.0 48.0C1050.0 48.2 1080.0 49.7 1100.0 49.0C1120.0 48.3 1142.5 46.3 1160.0 44.0C1177.5 41.7 1197.5 36.5 1205.0 35.0"/></g>
<path d="M1080.0 -3.0C1091.7 -3.0 1124.2 -3.0 1150.0 -3.0C1175.8 -3.0 1220.8 -3.0 1235.0 -3.0L1235.0 42.0C1222.5 40.0 1182.5 32.8 1160.0 30.0C1137.5 27.2 1110.0 25.8 1100.0 25.0Z" fill="url(#gH)" opacity="0.45"/><g fill="none" stroke="url(#gH)" stroke-width="0.8" opacity="0.6"><path d="M1080.0 -3.0C1091.7 -3.0 1124.2 -3.0 1150.0 -3.0C1175.8 -3.0 1220.8 -3.0 1235.0 -3.0"/><path d="M1081.3 -1.1C1092.9 -1.1 1125.1 -1.0 1150.7 -0.8C1176.3 -0.6 1220.9 -0.1 1235.0 0.0"/><path d="M1082.7 0.7C1094.1 0.8 1125.9 1.0 1151.3 1.4C1176.7 1.8 1221.1 2.7 1235.0 3.0"/><path d="M1084.0 2.6C1095.3 2.8 1126.8 3.0 1152.0 3.6C1177.2 4.2 1221.2 5.6 1235.0 6.0"/><path d="M1085.3 4.5C1096.6 4.7 1127.7 5.0 1152.7 5.8C1177.6 6.6 1221.3 8.5 1235.0 9.0"/><path d="M1086.7 6.3C1097.8 6.6 1128.6 7.1 1153.3 8.0C1178.1 8.9 1221.4 11.3 1235.0 12.0"/><path d="M1088.0 8.2C1099.0 8.5 1129.5 9.1 1154.0 10.2C1178.5 11.3 1221.5 14.2 1235.0 15.0"/><path d="M1089.3 10.1C1100.2 10.5 1130.4 11.1 1154.7 12.4C1178.9 13.7 1221.6 17.1 1235.0 18.0"/><path d="M1090.7 11.9C1101.4 12.4 1131.3 13.1 1155.3 14.6C1179.4 16.1 1221.7 19.9 1235.0 21.0"/><path d="M1092.0 13.8C1102.7 14.3 1132.2 15.1 1156.0 16.8C1179.8 18.5 1221.8 22.8 1235.0 24.0"/><path d="M1093.3 15.7C1103.9 16.2 1133.1 17.1 1156.7 19.0C1180.3 20.9 1221.9 25.7 1235.0 27.0"/><path d="M1094.7 17.5C1105.1 18.1 1133.9 19.1 1157.3 21.2C1180.7 23.3 1222.1 28.5 1235.0 30.0"/><path d="M1096.0 19.4C1106.3 20.1 1134.8 21.1 1158.0 23.4C1181.2 25.7 1222.2 31.4 1235.0 33.0"/><path d="M1097.3 21.3C1107.6 22.0 1135.7 23.1 1158.7 25.6C1181.6 28.1 1222.3 34.3 1235.0 36.0"/><path d="M1098.7 23.1C1108.8 23.9 1136.6 25.2 1159.3 27.8C1182.1 30.4 1222.4 37.1 1235.0 39.0"/><path d="M1100.0 25.0C1110.0 25.8 1137.5 27.2 1160.0 30.0C1182.5 32.8 1222.5 40.0 1235.0 42.0"/></g>
<path d="M1160.0 -3.0C1170.8 -3.0 1207.5 -6.8 1225.0 -3.0C1242.5 0.8 1252.2 11.2 1265.0 20.0C1277.8 28.8 1295.8 45.0 1302.0 50.0L1262.0 50.0C1257.5 48.3 1247.0 44.7 1235.0 40.0C1223.0 35.3 1205.8 26.7 1190.0 22.0C1174.2 17.3 1148.3 13.7 1140.0 12.0Z" fill="url(#gI)" opacity="0.45"/><g fill="none" stroke="url(#gI)" stroke-width="0.8" opacity="0.75"><path d="M1160.0 -3.0C1170.8 -3.0 1207.5 -6.8 1225.0 -3.0C1242.5 0.8 1252.2 11.2 1265.0 20.0C1277.8 28.8 1295.8 45.0 1302.0 50.0"/><path d="M1158.8 -2.1C1169.5 -2.0 1205.5 -5.4 1222.9 -1.5C1240.3 2.4 1250.5 12.6 1263.2 21.2C1276.0 29.8 1293.6 45.2 1299.6 50.0"/><path d="M1157.6 -1.2C1168.2 -1.0 1203.6 -4.0 1220.9 -0.1C1238.2 3.9 1248.7 14.0 1261.5 22.4C1274.2 30.7 1291.3 45.4 1297.3 50.0"/><path d="M1156.5 -0.4C1166.9 -0.1 1201.6 -2.6 1218.8 1.4C1236.0 5.4 1247.0 15.4 1259.7 23.5C1272.4 31.6 1289.1 45.6 1294.9 50.0"/><path d="M1155.3 0.5C1165.5 0.9 1199.7 -1.1 1216.8 2.9C1233.9 6.9 1245.3 16.9 1257.9 24.7C1270.6 32.6 1286.8 45.8 1292.6 50.0"/><path d="M1154.1 1.4C1164.2 1.9 1197.7 0.3 1214.7 4.4C1231.7 8.4 1243.6 18.3 1256.2 25.9C1268.8 33.5 1284.6 46.0 1290.2 50.0"/><path d="M1152.9 2.3C1162.9 2.9 1195.7 1.7 1212.6 5.8C1229.6 10.0 1241.9 19.7 1254.4 27.1C1267.0 34.4 1282.3 46.2 1287.9 50.0"/><path d="M1151.8 3.2C1161.6 3.9 1193.8 3.1 1210.6 7.3C1227.4 11.5 1240.2 21.1 1252.6 28.2C1265.1 35.4 1280.0 46.4 1285.5 50.0"/><path d="M1150.6 4.1C1160.2 4.8 1191.8 4.5 1208.5 8.8C1225.2 13.0 1238.4 22.5 1250.9 29.4C1263.3 36.3 1277.8 46.6 1283.2 50.0"/><path d="M1149.4 4.9C1158.9 5.8 1189.9 6.0 1206.5 10.2C1223.1 14.5 1236.7 24.0 1249.1 30.6C1261.5 37.2 1275.5 46.8 1280.8 50.0"/><path d="M1148.2 5.8C1157.6 6.8 1187.9 7.4 1204.4 11.7C1220.9 16.0 1235.0 25.4 1247.4 31.8C1259.7 38.1 1273.3 47.0 1278.5 50.0"/><path d="M1147.1 6.7C1156.3 7.8 1185.9 8.8 1202.4 13.2C1218.8 17.5 1233.3 26.8 1245.6 32.9C1257.9 39.1 1271.0 47.2 1276.1 50.0"/><path d="M1145.9 7.6C1155.0 8.8 1184.0 10.2 1200.3 14.6C1216.6 19.1 1231.6 28.2 1243.8 34.1C1256.1 40.0 1268.8 47.4 1273.8 50.0"/><path d="M1144.7 8.5C1153.6 9.7 1182.0 11.6 1198.2 16.1C1214.5 20.6 1229.9 29.6 1242.1 35.3C1254.3 40.9 1266.5 47.5 1271.4 50.0"/><path d="M1143.5 9.4C1152.3 10.7 1180.0 13.1 1196.2 17.6C1212.3 22.1 1228.1 31.1 1240.3 36.5C1252.4 41.9 1264.3 47.7 1269.1 50.0"/><path d="M1142.4 10.2C1151.0 11.7 1178.1 14.5 1194.1 19.1C1210.1 23.6 1226.4 32.5 1238.5 37.6C1250.6 42.8 1262.0 47.9 1266.7 50.0"/><path d="M1141.2 11.1C1149.7 12.7 1176.1 15.9 1192.1 20.5C1208.0 25.1 1224.7 33.9 1236.8 38.8C1248.8 43.7 1259.8 48.1 1264.4 50.0"/><path d="M1140.0 12.0C1148.3 13.7 1174.2 17.3 1190.0 22.0C1205.8 26.7 1223.0 35.3 1235.0 40.0C1247.0 44.7 1257.5 48.3 1262.0 50.0"/></g>
<path d="M1290.0 40.0C1298.3 37.5 1321.3 31.2 1340.0 25.0C1358.7 18.8 1391.7 6.7 1402.0 3.0L1412.0 12.0C1402.0 15.8 1370.7 28.7 1352.0 35.0C1333.3 41.3 1308.7 47.5 1300.0 50.0Z" fill="url(#gM)" opacity="0.5"/><g fill="none" stroke="url(#gM)" stroke-width="1" opacity="0.8"><path d="M1290.0 40.0C1298.3 37.5 1321.3 31.2 1340.0 25.0C1358.7 18.8 1391.7 6.7 1402.0 3.0"/><path d="M1290.9 40.9C1299.3 38.4 1322.4 32.1 1341.1 25.9C1359.8 19.7 1392.6 7.5 1402.9 3.8"/><path d="M1291.8 41.8C1300.2 39.3 1323.5 33.0 1342.2 26.8C1360.8 20.6 1393.5 8.3 1403.8 4.6"/><path d="M1292.7 42.7C1301.2 40.2 1324.6 33.9 1343.3 27.7C1361.9 21.5 1394.5 9.2 1404.7 5.5"/><path d="M1293.6 43.6C1302.1 41.1 1325.7 34.9 1344.4 28.6C1363.0 22.4 1395.4 10.0 1405.6 6.3"/><path d="M1294.5 44.5C1303.0 42.0 1326.8 35.8 1345.5 29.5C1364.1 23.3 1396.4 10.8 1406.5 7.1"/><path d="M1295.5 45.5C1304.0 43.0 1327.9 36.7 1346.5 30.5C1365.2 24.2 1397.3 11.7 1407.5 7.9"/><path d="M1296.4 46.4C1304.9 43.9 1329.0 37.6 1347.6 31.4C1366.3 25.1 1398.2 12.5 1408.4 8.7"/><path d="M1297.3 47.3C1305.8 44.8 1330.1 38.6 1348.7 32.3C1367.4 26.0 1399.2 13.3 1409.3 9.5"/><path d="M1298.2 48.2C1306.8 45.7 1331.2 39.5 1349.8 33.2C1368.5 26.9 1400.1 14.2 1410.2 10.4"/><path d="M1299.1 49.1C1307.7 46.6 1332.2 40.4 1350.9 34.1C1369.6 27.8 1401.1 15.0 1411.1 11.2"/><path d="M1300.0 50.0C1308.7 47.5 1333.3 41.3 1352.0 35.0C1370.7 28.7 1402.0 15.8 1412.0 12.0"/></g>
<path d="M1268.0 50.0C1272.7 45.3 1289.0 30.8 1296.0 22.0C1303.0 13.2 1307.7 1.2 1310.0 -3.0L1330.0 -3.0C1327.5 1.2 1321.3 13.2 1315.0 22.0C1308.7 30.8 1295.8 45.3 1292.0 50.0Z" fill="url(#gJ)" opacity="0.6"/><g fill="none" stroke="url(#gJ)" stroke-width="1" opacity="0.85"><path d="M1268.0 50.0C1272.7 45.3 1289.0 30.8 1296.0 22.0C1303.0 13.2 1307.7 1.2 1310.0 -3.0"/><path d="M1270.2 50.0C1274.8 45.3 1290.8 30.8 1297.7 22.0C1304.7 13.2 1309.5 1.2 1311.8 -3.0"/><path d="M1272.4 50.0C1276.9 45.3 1292.6 30.8 1299.5 22.0C1306.3 13.2 1311.3 1.2 1313.6 -3.0"/><path d="M1274.5 50.0C1279.0 45.3 1294.4 30.8 1301.2 22.0C1308.0 13.2 1313.1 1.2 1315.5 -3.0"/><path d="M1276.7 50.0C1281.1 45.3 1296.2 30.8 1302.9 22.0C1309.7 13.2 1314.9 1.2 1317.3 -3.0"/><path d="M1278.9 50.0C1283.2 45.3 1297.9 30.8 1304.6 22.0C1311.3 13.2 1316.7 1.2 1319.1 -3.0"/><path d="M1281.1 50.0C1285.3 45.3 1299.7 30.8 1306.4 22.0C1313.0 13.2 1318.5 1.2 1320.9 -3.0"/><path d="M1283.3 50.0C1287.4 45.3 1301.5 30.8 1308.1 22.0C1314.7 13.2 1320.3 1.2 1322.7 -3.0"/><path d="M1285.5 50.0C1289.5 45.3 1303.3 30.8 1309.8 22.0C1316.3 13.2 1322.1 1.2 1324.5 -3.0"/><path d="M1287.6 50.0C1291.6 45.3 1305.1 30.8 1311.5 22.0C1318.0 13.2 1323.9 1.2 1326.4 -3.0"/><path d="M1289.8 50.0C1293.7 45.3 1306.9 30.8 1313.3 22.0C1319.7 13.2 1325.7 1.2 1328.2 -3.0"/><path d="M1292.0 50.0C1295.8 45.3 1308.7 30.8 1315.0 22.0C1321.3 13.2 1327.5 1.2 1330.0 -3.0"/></g>
<path d="M1305.0 -3.0C1311.7 0.8 1333.3 11.2 1345.0 20.0C1356.7 28.8 1370.0 45.0 1375.0 50.0L1420.0 50.0C1414.2 44.2 1395.0 23.8 1385.0 15.0C1375.0 6.2 1364.2 0.0 1360.0 -3.0Z" fill="url(#gK)" opacity="0.5"/><g fill="none" stroke="url(#gK)" stroke-width="0.9" opacity="0.75"><path d="M1305.0 -3.0C1311.7 0.8 1333.3 11.2 1345.0 20.0C1356.7 28.8 1370.0 45.0 1375.0 50.0"/><path d="M1309.2 -3.0C1315.7 0.8 1336.5 10.8 1348.1 19.6C1359.6 28.4 1373.4 44.9 1378.5 50.0"/><path d="M1313.5 -3.0C1319.7 0.7 1339.7 10.4 1351.2 19.2C1362.6 28.1 1376.8 44.9 1381.9 50.0"/><path d="M1317.7 -3.0C1323.8 0.6 1342.9 10.0 1354.2 18.8C1365.5 27.7 1380.2 44.8 1385.4 50.0"/><path d="M1321.9 -3.0C1327.8 0.6 1346.2 9.6 1357.3 18.5C1368.5 27.3 1383.6 44.7 1388.8 50.0"/><path d="M1326.2 -3.0C1331.9 0.5 1349.4 9.2 1360.4 18.1C1371.4 26.9 1387.0 44.7 1392.3 50.0"/><path d="M1330.4 -3.0C1335.9 0.4 1352.6 8.9 1363.5 17.7C1374.4 26.5 1390.4 44.6 1395.8 50.0"/><path d="M1334.6 -3.0C1339.9 0.4 1355.8 8.5 1366.5 17.3C1377.3 26.1 1393.8 44.6 1399.2 50.0"/><path d="M1338.8 -3.0C1344.0 0.3 1359.0 8.1 1369.6 16.9C1380.3 25.8 1397.2 44.5 1402.7 50.0"/><path d="M1343.1 -3.0C1348.0 0.3 1362.2 7.7 1372.7 16.5C1383.2 25.4 1400.6 44.4 1406.2 50.0"/><path d="M1347.3 -3.0C1352.1 0.2 1365.4 7.3 1375.8 16.2C1386.2 25.0 1404.0 44.4 1409.6 50.0"/><path d="M1351.5 -3.0C1356.1 0.1 1368.6 6.9 1378.8 15.8C1389.1 24.6 1407.4 44.3 1413.1 50.0"/><path d="M1355.8 -3.0C1360.1 0.1 1371.8 6.6 1381.9 15.4C1392.1 24.2 1410.8 44.2 1416.5 50.0"/><path d="M1360.0 -3.0C1364.2 0.0 1375.0 6.2 1385.0 15.0C1395.0 23.8 1414.2 44.2 1420.0 50.0"/></g>
<path d="M1360.0 50.0C1366.7 46.0 1389.2 34.8 1400.0 26.0C1410.8 17.2 1420.8 1.8 1425.0 -3.0L1446.0 -3.0C1441.3 1.8 1428.2 17.2 1418.0 26.0C1407.8 34.8 1390.5 46.0 1385.0 50.0Z" fill="url(#gJ)" opacity="0.6"/><g fill="none" stroke="url(#gJ)" stroke-width="1" opacity="0.8"><path d="M1360.0 50.0C1366.7 46.0 1389.2 34.8 1400.0 26.0C1410.8 17.2 1420.8 1.8 1425.0 -3.0"/><path d="M1362.3 50.0C1368.8 46.0 1390.9 34.8 1401.6 26.0C1412.4 17.2 1422.7 1.8 1426.9 -3.0"/><path d="M1364.5 50.0C1371.0 46.0 1392.6 34.8 1403.3 26.0C1414.0 17.2 1424.6 1.8 1428.8 -3.0"/><path d="M1366.8 50.0C1373.2 46.0 1394.3 34.8 1404.9 26.0C1415.6 17.2 1426.4 1.8 1430.7 -3.0"/><path d="M1369.1 50.0C1375.3 46.0 1396.0 34.8 1406.5 26.0C1417.1 17.2 1428.3 1.8 1432.6 -3.0"/><path d="M1371.4 50.0C1377.5 46.0 1397.7 34.8 1408.2 26.0C1418.7 17.2 1430.2 1.8 1434.5 -3.0"/><path d="M1373.6 50.0C1379.7 46.0 1399.3 34.8 1409.8 26.0C1420.3 17.2 1432.0 1.8 1436.5 -3.0"/><path d="M1375.9 50.0C1381.8 46.0 1401.0 34.8 1411.5 26.0C1421.9 17.2 1433.9 1.8 1438.4 -3.0"/><path d="M1378.2 50.0C1384.0 46.0 1402.7 34.8 1413.1 26.0C1423.4 17.2 1435.7 1.8 1440.3 -3.0"/><path d="M1380.5 50.0C1386.2 46.0 1404.4 34.8 1414.7 26.0C1425.0 17.2 1437.6 1.8 1442.2 -3.0"/><path d="M1382.7 50.0C1388.3 46.0 1406.1 34.8 1416.4 26.0C1426.6 17.2 1439.5 1.8 1444.1 -3.0"/><path d="M1385.0 50.0C1390.5 46.0 1407.8 34.8 1418.0 26.0C1428.2 17.2 1441.3 1.8 1446.0 -3.0"/></g>
<path d="M1330.0 -3.0C1345.0 -1.7 1395.0 -0.2 1420.0 5.0C1445.0 10.2 1464.2 20.5 1480.0 28.0C1495.8 35.5 1509.2 46.3 1515.0 50.0L1495.0 50.0C1492.5 48.7 1489.2 46.0 1480.0 42.0C1470.8 38.0 1458.3 31.0 1440.0 26.0C1421.7 21.0 1381.7 14.3 1370.0 12.0Z" fill="url(#gM)" opacity="0.55"/><g fill="none" stroke="url(#gM)" stroke-width="1" opacity="0.8"><path d="M1330.0 -3.0C1345.0 -1.7 1395.0 -0.2 1420.0 5.0C1445.0 10.2 1464.2 20.5 1480.0 28.0C1495.8 35.5 1509.2 46.3 1515.0 50.0"/><path d="M1333.1 -1.8C1347.8 -0.4 1397.1 1.5 1421.5 6.6C1446.0 11.8 1464.7 21.8 1480.0 29.1C1495.3 36.3 1507.9 46.5 1513.5 50.0"/><path d="M1336.2 -0.7C1350.6 0.8 1399.1 3.1 1423.1 8.2C1447.1 13.4 1465.2 23.2 1480.0 30.2C1494.8 37.1 1506.6 46.7 1511.9 50.0"/><path d="M1339.2 0.5C1353.5 2.0 1401.2 4.7 1424.6 9.8C1448.1 15.0 1465.7 24.5 1480.0 31.2C1494.3 37.9 1505.3 46.9 1510.4 50.0"/><path d="M1342.3 1.6C1356.3 3.3 1403.2 6.3 1426.2 11.5C1449.1 16.6 1466.2 25.9 1480.0 32.3C1493.8 38.7 1504.0 47.1 1508.8 50.0"/><path d="M1345.4 2.8C1359.1 4.5 1405.3 8.0 1427.7 13.1C1450.1 18.2 1466.7 27.2 1480.0 33.4C1493.3 39.5 1502.8 47.2 1507.3 50.0"/><path d="M1348.5 3.9C1361.9 5.7 1407.3 9.6 1429.2 14.7C1451.2 19.8 1467.2 28.6 1480.0 34.5C1492.8 40.3 1501.5 47.4 1505.8 50.0"/><path d="M1351.5 5.1C1364.7 6.9 1409.4 11.2 1430.8 16.3C1452.2 21.4 1467.8 29.9 1480.0 35.5C1492.2 41.2 1500.2 47.6 1504.2 50.0"/><path d="M1354.6 6.2C1367.6 8.2 1411.4 12.9 1432.3 17.9C1453.2 23.0 1468.3 31.3 1480.0 36.6C1491.7 42.0 1498.9 47.8 1502.7 50.0"/><path d="M1357.7 7.4C1370.4 9.4 1413.5 14.5 1433.8 19.5C1454.2 24.6 1468.8 32.6 1480.0 37.7C1491.2 42.8 1497.6 47.9 1501.2 50.0"/><path d="M1360.8 8.5C1373.2 10.6 1415.5 16.1 1435.4 21.2C1455.3 26.2 1469.3 34.0 1480.0 38.8C1490.7 43.6 1496.3 48.1 1499.6 50.0"/><path d="M1363.8 9.7C1376.0 11.9 1417.6 17.7 1436.9 22.8C1456.3 27.8 1469.8 35.3 1480.0 39.8C1490.2 44.4 1495.1 48.3 1498.1 50.0"/><path d="M1366.9 10.8C1378.8 13.1 1419.6 19.4 1438.5 24.4C1457.3 29.4 1470.3 36.7 1480.0 40.9C1489.7 45.2 1493.8 48.5 1496.5 50.0"/><path d="M1370.0 12.0C1381.7 14.3 1421.7 21.0 1440.0 26.0C1458.3 31.0 1470.8 38.0 1480.0 42.0C1489.2 46.0 1492.5 48.7 1495.0 50.0"/></g>
</g>
<ellipse cx="650" cy="45" rx="45" ry="3.5" fill="#7ab850" opacity=".35" filter="url(#b2)"/>
<ellipse cx="850" cy="46" rx="35" ry="3" fill="#6a6a88" opacity=".35" filter="url(#b2)"/>
<ellipse cx="1005" cy="45" rx="25" ry="3" fill="#e050a0" opacity=".4" filter="url(#b2)"/>
</svg>
<svg class="a" style="left:17px;top:3px" width="40" height="38" viewBox="0 0 40 38">
<circle cx="18.5" cy="18" r="16.6" fill="#e8274e"/>
<path d="M18.5 1.4A16.6 16.6 0 0 1 33 10L10 32A16.6 16.6 0 0 1 4 9Z" fill="#ee4f70" opacity=".6"/>
<path d="M9.6 28.5L16.5 8.6H20.6L27.5 28.5H23.9L18.6 12.6L13.2 28.5Z" fill="#fff"/>
</svg>
<div class="a t" style="left:58px;top:-4.2px;font-size:39px;font-style:italic;color:#6d6d6f;-webkit-text-stroke:1.1px #6d6d6f;letter-spacing:-0.6px;transform:scaleX(0.95);transform-origin:0 0">accurate</div>
<svg class="a" style="left:203px;top:2px" width="36" height="24" viewBox="0 0 36 24"><path d="M8 21H28Q34 21 34 15.5Q34 10 28.5 10Q27.5 3 20.5 3Q14.5 3 13 8.5Q11 7.5 9 8.5Q6.5 10 7 12.5Q2 13 2 17Q2 21 8 21Z" fill="#fff" stroke="#777" stroke-width="1.6"/></svg>
<div class="a t" style="left:205px;top:22px;font-size:10px;font-style:italic;font-weight:bold;color:#6f6f6f;letter-spacing:0px">online</div>
<div class="a" style="left:280px;top:18.5px;width:13px;height:13px;border-radius:50%;background:#c4c4c4"></div>
<div class="a t" style="left:63px;top:34px;font-size:9.8px;color:#333;letter-spacing:0px">v1.0.1#3530-2276934 []</div>
<svg class="a" style="left:1455px;top:11px" width="25" height="25" viewBox="0 0 25 25">
<rect x="4.5" y="4.5" width="16" height="16" rx="3.5" fill="none" stroke="#fff" stroke-width="2"/>
<path d="M8.5 1.5V4M12.5 1.5V4M16.5 1.5V4M8.5 21V23.5M12.5 21V23.5M16.5 21V23.5M1.5 8.5H4M1.5 12.5H4M1.5 16.5H4M21 8.5H23.5M21 12.5H23.5M21 16.5H23.5" stroke="#fff" stroke-width="1.6"/>
<text x="12.3" y="16.5" text-anchor="middle" font-family="Liberation Sans" font-weight="bold" font-size="9.5" fill="#fff">AI</text></svg>
<svg class="a" style="left:1509px;top:10px" width="26" height="26" viewBox="0 0 26 26"><circle cx="11.5" cy="11.5" r="8" fill="none" stroke="#fff" stroke-width="2.5"/><path d="M17.5 17.5L23 23" stroke="#fff" stroke-width="2.6" stroke-linecap="round"/></svg>
<svg class="a" style="left:1567px;top:12px" width="22" height="22" viewBox="0 0 22 22"><circle cx="11" cy="11" r="8.9" fill="none" stroke="#fff" stroke-width="2"/><path d="M8.3 8.6Q8.3 5.9 11 5.9Q13.8 5.9 13.8 8.4Q13.8 10.2 11.6 11Q11 11.3 11 12.6" fill="none" stroke="#fff" stroke-width="2"/><circle cx="11" cy="15.8" r="1.2" fill="#fff"/></svg>
<svg class="a" style="left:1624px;top:13px" width="22" height="23" viewBox="0 0 22 23"><path d="M3.5 16.5Q5.5 14.5 5.5 11V8.5Q5.5 2.6 11 2.6Q16.5 2.6 16.5 8.5V11Q16.5 14.5 18.5 16.5Z" fill="none" stroke="#fff" stroke-width="2" stroke-linejoin="round"/><path d="M8.8 19.6Q11 21.8 13.2 19.6" fill="none" stroke="#fff" stroke-width="2"/></svg>
<div class="a t" style="right:77px;text-align:right;top:5.2px;font-size:19.5px;color:#fff;">Akira, Tbk.</div>
<div class="a t" style="right:77px;text-align:right;top:27.8px;font-size:14px;color:#e8ecf4;">Michelle Georgina</div>
<svg class="a" style="left:1857px;top:3px" width="42" height="42" viewBox="0 0 42 42"><defs><clipPath id="av"><circle cx="21" cy="21" r="20"/></clipPath></defs>
<g clip-path="url(#av)"><rect width="42" height="42" fill="#d8d9de"/><rect x="0" y="0" width="12" height="42" fill="#e8e8ec"/><path d="M11 16Q10 4 22 3Q34 3 33 15Q33 21 30 24Q28 14 22 14Q16 15 14 22Q11 21 11 16Z" fill="#25262b"/><path d="M14 20Q18 15 24 16Q29 18 29 25Q27 30 21 30Q15 29 14 20Z" fill="#efe9e6"/><path d="M17 22h3M23 22h3" stroke="#333" stroke-width="1.4"/><path d="M4 42Q8 30 20 30Q32 30 36 42Z" fill="#f6f6f8"/><path d="M20.5 31L22 31L23 42L19.5 42Z" fill="#2b2b2f"/></g></svg>
<svg class="a" style="left:1902px;top:18px" width="12" height="8"><path d="M1.5 1.5L6 6L10.5 1.5" fill="none" stroke="#fff" stroke-width="2"/></svg>
<div class="a" style="left:0;top:50px;width:62px;height:771px;background:linear-gradient(90deg,#001857 0%,#1a3266 40%,#3e5180 75%,#5c6b8f 100%)"></div>
<div class="a" style="left:0;top:438px;width:62px;height:54px;background:#555;border:4.6px solid #ed1c24"></div>
<svg class="a" style="left:16px;top:85px" width="30" height="30" viewBox="0 0 30 30"><path d="M15.00 2.50 L15.33 2.51 L15.65 2.53 L15.98 2.57 L16.30 2.63 L16.62 2.72 L16.92 2.88 L17.20 3.12 L17.44 3.51 L17.63 4.07 L17.74 4.76 L17.83 5.45 L17.92 6.01 L18.04 6.40 L18.20 6.67 L18.37 6.85 L18.56 7.00 L18.76 7.12 L18.95 7.24 L19.15 7.35 L19.35 7.47 L19.55 7.58 L19.74 7.69 L19.94 7.81 L20.15 7.91 L20.37 8.00 L20.62 8.06 L20.92 8.07 L21.32 7.98 L21.85 7.78 L22.50 7.50 L23.16 7.26 L23.73 7.14 L24.19 7.15 L24.54 7.28 L24.82 7.46 L25.06 7.69 L25.28 7.94 L25.47 8.20 L25.66 8.47 L25.83 8.75 L25.98 9.04 L26.13 9.33 L26.26 9.63 L26.36 9.94 L26.44 10.26 L26.46 10.60 L26.39 10.97 L26.18 11.37 L25.78 11.81 L25.24 12.26 L24.68 12.68 L24.24 13.04 L23.97 13.34 L23.82 13.60 L23.74 13.85 L23.71 14.08 L23.70 14.32 L23.70 14.54 L23.70 14.77 L23.70 15.00 L23.70 15.23 L23.70 15.46 L23.70 15.68 L23.71 15.92 L23.74 16.15 L23.82 16.40 L23.97 16.66 L24.24 16.96 L24.68 17.32 L25.24 17.74 L25.78 18.19 L26.18 18.63 L26.39 19.03 L26.46 19.40 L26.44 19.74 L26.36 20.06 L26.26 20.37 L26.13 20.67 L25.98 20.96 L25.83 21.25 L25.66 21.53 L25.47 21.80 L25.28 22.06 L25.06 22.31 L24.82 22.54 L24.54 22.72 L24.19 22.85 L23.73 22.86 L23.16 22.74 L22.50 22.50 L21.85 22.22 L21.32 22.02 L20.92 21.93 L20.62 21.94 L20.37 22.00 L20.15 22.09 L19.94 22.19 L19.74 22.31 L19.55 22.42 L19.35 22.53 L19.15 22.65 L18.95 22.76 L18.76 22.88 L18.56 23.00 L18.37 23.15 L18.20 23.33 L18.04 23.60 L17.92 23.99 L17.83 24.55 L17.74 25.24 L17.63 25.93 L17.44 26.49 L17.20 26.88 L16.92 27.12 L16.62 27.28 L16.30 27.37 L15.98 27.43 L15.65 27.47 L15.33 27.49 L15.00 27.50 L14.67 27.49 L14.35 27.47 L14.02 27.43 L13.70 27.37 L13.38 27.28 L13.08 27.12 L12.80 26.88 L12.56 26.49 L12.37 25.93 L12.26 25.24 L12.17 24.55 L12.08 23.99 L11.96 23.60 L11.80 23.33 L11.63 23.15 L11.44 23.00 L11.24 22.88 L11.05 22.76 L10.85 22.65 L10.65 22.53 L10.45 22.42 L10.26 22.31 L10.06 22.19 L9.85 22.09 L9.63 22.00 L9.38 21.94 L9.08 21.93 L8.68 22.02 L8.15 22.22 L7.50 22.50 L6.84 22.74 L6.27 22.86 L5.81 22.85 L5.46 22.72 L5.18 22.54 L4.94 22.31 L4.72 22.06 L4.53 21.80 L4.34 21.53 L4.17 21.25 L4.02 20.96 L3.87 20.67 L3.74 20.37 L3.64 20.06 L3.56 19.74 L3.54 19.40 L3.61 19.03 L3.82 18.63 L4.22 18.19 L4.76 17.74 L5.32 17.32 L5.76 16.96 L6.03 16.66 L6.18 16.40 L6.26 16.15 L6.29 15.92 L6.30 15.68 L6.30 15.46 L6.30 15.23 L6.30 15.00 L6.30 14.77 L6.30 14.54 L6.30 14.32 L6.29 14.08 L6.26 13.85 L6.18 13.60 L6.03 13.34 L5.76 13.04 L5.32 12.68 L4.76 12.26 L4.22 11.81 L3.82 11.37 L3.61 10.97 L3.54 10.60 L3.56 10.26 L3.64 9.94 L3.74 9.63 L3.87 9.33 L4.02 9.04 L4.17 8.75 L4.34 8.47 L4.53 8.20 L4.72 7.94 L4.94 7.69 L5.18 7.46 L5.46 7.28 L5.81 7.15 L6.27 7.14 L6.84 7.26 L7.50 7.50 L8.15 7.78 L8.68 7.98 L9.08 8.07 L9.38 8.06 L9.63 8.00 L9.85 7.91 L10.06 7.81 L10.26 7.69 L10.45 7.58 L10.65 7.47 L10.85 7.35 L11.05 7.24 L11.24 7.12 L11.44 7.00 L11.63 6.85 L11.80 6.67 L11.96 6.40 L12.08 6.01 L12.17 5.45 L12.26 4.76 L12.37 4.07 L12.56 3.51 L12.80 3.12 L13.08 2.88 L13.38 2.72 L13.70 2.63 L14.02 2.57 L14.35 2.53 L14.67 2.51Z" fill="none" stroke="#fff" stroke-width="2.1" stroke-linejoin="round"/><circle cx="15" cy="15" r="3.8" fill="none" stroke="#fff" stroke-width="2.1"/></svg>
<svg class="a" style="left:15px;top:137px" width="32" height="30" viewBox="0 0 32 30"><rect x="10.5" y="1.5" width="10" height="9" fill="none" stroke="#fff" stroke-width="1.8"/><path d="M8 10.5H24L29 20.5H3Z" fill="none" stroke="#fff" stroke-width="1.8" stroke-linejoin="round"/><rect x="2" y="20.5" width="28" height="7.5" fill="none" stroke="#fff" stroke-width="1.8"/><path d="M12 23.5H20" stroke="#fff" stroke-width="1.8"/><path d="M11 13.5h2M15 13.5h2M19 13.5h2M11 16.5h2M15 16.5h2M19 16.5h2" stroke="#fff" stroke-width="1.6"/></svg>
<svg class="a" style="left:15px;top:188px" width="32" height="32" viewBox="0 0 32 32"><path d="M4 30V8L20 2V30" fill="none" stroke="#fff" stroke-width="1.9" stroke-linejoin="round"/><path d="M20 12H29V30" fill="none" stroke="#fff" stroke-width="1.9"/><path d="M1.5 30.2H31" stroke="#fff" stroke-width="1.9"/><path d="M8 13H15M8 17.5H15M8 22H15M8 26.5H15M23 16H26M23 20H26M23 24H26" stroke="#fff" stroke-width="1.9"/></svg>
<svg class="a" style="left:17px;top:240px" width="28" height="32" viewBox="0 0 28 32"><path d="M5.5 2H23V25H5.5Q3 25 3 27.5Q3 30 5.5 30H23V25" fill="none" stroke="#fff" stroke-width="1.9" stroke-linejoin="round"/><path d="M3 27.5V4.5Q3 2 5.5 2" fill="none" stroke="#fff" stroke-width="1.9"/><path d="M8 2V25" stroke="#fff" stroke-width="1.2"/><rect x="11" y="6" width="8" height="4" fill="none" stroke="#fff" stroke-width="1.6"/></svg>
<svg class="a" style="left:15px;top:292px" width="32" height="32" viewBox="0 0 32 32"><path d="M2 10L15 2L28 10Z" fill="none" stroke="#fff" stroke-width="1.9" stroke-linejoin="round"/><circle cx="15" cy="6.8" r="1.4" fill="#fff"/><path d="M2 12H28M5 13V26M10 13V21M20 13V17M25 13V17M2 28H12" stroke="#fff" stroke-width="1.9"/><rect x="13" y="18" width="17" height="12" rx="1.5" fill="#34477a" stroke="#fff" stroke-width="1.9"/><path d="M13 22H30M16 26H21" stroke="#fff" stroke-width="1.7"/></svg>
<svg class="a" style="left:8px;top:335px" width="48" height="50" viewBox="0 0 48 50"><path d="M18 19L23.5 13H30L35.4 18.5V36Q35.4 39 32.5 39H21Q18 39 18 36Z" fill="none" stroke="#fff" stroke-width="1.9" stroke-linejoin="round"/><path d="M23.5 13Q20 13 18 16L10.5 30Q9.5 33 12 34.2L18.5 37.5" fill="none" stroke="#fff" stroke-width="1.9" stroke-linejoin="round"/><circle cx="26.3" cy="16.8" r="1.6" fill="#fff"/><path d="M26.5 17Q31 16.5 30 11" fill="none" stroke="#fff" stroke-width="1.5"/><text x="26.7" y="30.5" text-anchor="middle" font-family="Liberation Sans" font-weight="bold" font-size="8.5" fill="#fff">Rp</text></svg>
<svg class="a" style="left:15px;top:395px" width="32" height="32" viewBox="0 0 32 32"><path d="M1.5 3.5H5.5L9 22H27" fill="none" stroke="#fff" stroke-width="1.9" stroke-linejoin="round"/><path d="M6.5 8H30L28 19H8.5" fill="none" stroke="#fff" stroke-width="1.9" stroke-linejoin="round"/><path d="M14 8V19M21 8V19M7.5 13.5H29" stroke="#fff" stroke-width="1.9"/><circle cx="11" cy="27" r="2.3" fill="none" stroke="#fff" stroke-width="1.9"/><circle cx="25" cy="27" r="2.3" fill="none" stroke="#fff" stroke-width="1.9"/></svg>
<svg class="a" style="left:14px;top:447px" width="34" height="34" viewBox="0 0 34 34"><path d="M1.5 2H6Q8.5 2 8.5 4.5V24H29" fill="none" stroke="#fff" stroke-width="2"/><rect x="12.5" y="3" width="11" height="8" fill="none" stroke="#fff" stroke-width="2"/><rect x="11" y="11" width="16" height="13" fill="none" stroke="#fff" stroke-width="2"/><path d="M18 3V6M18 11V15" stroke="#fff" stroke-width="2"/><path d="M8.5 19.5H29V24" fill="none" stroke="#fff" stroke-width="2"/><circle cx="12" cy="28" r="2.6" fill="#555" stroke="#fff" stroke-width="2"/><circle cx="25" cy="28" r="2.6" fill="#555" stroke="#fff" stroke-width="2"/></svg>
<svg class="a" style="left:8px;top:490px" width="48" height="50" viewBox="0 0 48 50"><path d="M10.5 37.8V21L14 17.4H23.8V28M25.6 27V12.8H36.6V37.8M7 37.8H39.5M13.5 23H19.5M13.5 26.3H19.5M29 17.5H33M29 21H33M29 24.5H33" fill="none" stroke="#fff" stroke-width="1.9"/><path d="M16 36.5V33Q16 31 18.2 30.5L20.5 27.5H27.5L29.8 30.5Q32 31 32 33V36.5Z" fill="#2a3f70" stroke="#fff" stroke-width="1.9" stroke-linejoin="round"/><circle cx="20" cy="36" r="1.7" fill="#fff"/><circle cx="28" cy="36" r="1.7" fill="#fff"/></svg>
<svg class="a" style="left:15px;top:551px" width="32" height="32" viewBox="0 0 32 32"><path d="M19 30H4Q2 30 2 28V4Q2 2 4 2H22Q24 2 24 4V13" fill="none" stroke="#fff" stroke-width="1.9"/><text x="12.5" y="10" text-anchor="middle" font-family="Liberation Sans" font-weight="bold" font-size="7.5" fill="#fff">TAX</text><path d="M5.5 14H15M5.5 18.5H15M5.5 23H15" stroke="#fff" stroke-width="1.9"/><rect x="18" y="15" width="12" height="16" rx="1.5" fill="none" stroke="#fff" stroke-width="1.9"/><path d="M20.5 18.5H27.5M21 23h1.5M24 23h1.5M21 26.5h1.5M24 26.5h1.5" stroke="#fff" stroke-width="1.7"/></svg>
<svg class="a" style="left:16px;top:603px" width="30" height="32" viewBox="0 0 30 32"><path d="M6 2H22Q26 2 26 6V26Q26 30 22 30H6Q3 30 3 27V5Q3 2 6 2Z" fill="none" stroke="#fff" stroke-width="1.9"/><path d="M14.5 9A8 8 0 1 0 22.5 17H14.5Z" fill="none" stroke="#fff" stroke-width="1.9" stroke-linejoin="round"/><path d="M17 6.5A8 8 0 0 1 25 14.5H17Z" fill="none" stroke="#fff" stroke-width="1.7"/><path d="M8 26.5H20" stroke="#fff" stroke-width="1.9"/></svg>
<div class="a" style="left:68px;top:50px;width:116px;height:37px;background:#ec3768;border-radius:7px 7px 0 0"></div>
<div class="a t" style="left:81px;top:60.1px;font-size:17px;font-weight:bold;color:#fff;">Dashboard</div>
<div class="a" style="left:1873px;top:50px;width:46px;height:37px;background:#dcdcdc"></div>
<div class="a t" style="left:1887px;top:59.0px;font-size:16px;color:#555;">1</div>
<svg class="a" style="left:1902px;top:64px" width="12" height="8"><path d="M1.5 1.5L6 6L10.5 1.5" fill="none" stroke="#555" stroke-width="1.5"/></svg>
<div class="a" style="left:62px;top:86px;width:1857px;height:735px;background:#efefef;border-top:1.6px solid #e94b6f;border-radius:6px 6px 0 0"></div>
<div class="a" style="left:78px;top:95px;width:1816px;height:51px;background:#f9f9f9;border:1px solid #c4c4c4;border-radius:6px"></div>
<div class="a" style="left:84px;top:101px;width:188px;height:38px;background:#d4e7fc;border:1.3px solid #2766b5;border-radius:5px"></div>
<svg class="a" style="left:139px;top:111px" width="17" height="17"><path d="M6.6 0h3.8v6.6h6.6v3.8h-6.6v6.6h-3.8v-6.6h-6.6v-3.8h6.6z" fill="#124d9c"/></svg>
<div class="a t" style="left:168px;top:110.3px;font-size:16px;color:#1c4f9c;">Widget</div>
<div class="a" style="left:1464px;top:101px;width:388px;height:38px;background:#fff;border:1px solid #c8c8c8;border-radius:4px"></div>
<div class="a t" style="left:1475px;top:109.7px;font-size:18px;color:#111;">Dashboard Utama</div>
<svg class="a" style="left:1826px;top:114px" width="16" height="10"><path d="M2 2l6 6l6-6" fill="none" stroke="#111" stroke-width="2.2"/></svg>
<svg class="a" style="left:1873px;top:111px" width="8" height="18"><circle cx="4" cy="3" r="1.9" fill="#666"/><circle cx="4" cy="9" r="1.9" fill="#666"/><circle cx="4" cy="15" r="1.9" fill="#666"/></svg>
<div class="card" style="left:78px;top:158px;width:596px;height:292px"></div><div class="a" style="left:89px;top:187px;width:574px;height:1px;background:#dcdcdc"></div><div class="a t" style="left:95px;top:164.4px;font-size:15px;font-weight:bold;color:#333;">Aktifitas Terakhir Anda (Michelle Georgina)</div><svg class="a" style="left:627px;top:163px" width="18" height="18" viewBox="0 0 18 18"><path d="M14.2 6.2A6.3 6.3 0 1 0 15.1 10.5" fill="none" stroke="#111" stroke-width="2.1"/><path d="M15.6 2.2V7.4H10.4" fill="none" stroke="#111" stroke-width="2.1" stroke-linejoin="miter"/></svg><svg class="a" style="left:655px;top:163px" width="8" height="18"><circle cx="4" cy="3.7" r="1.6" fill="#6e6e6e"/><circle cx="4" cy="9" r="1.6" fill="#6e6e6e"/><circle cx="4" cy="14.3" r="1.6" fill="#6e6e6e"/></svg>
<div class="card" style="left:685px;top:158px;width:596px;height:292px"></div><div class="a" style="left:696px;top:187px;width:574px;height:1px;background:#dcdcdc"></div><div class="a t" style="left:702px;top:164.4px;font-size:15px;font-weight:bold;color:#333;">Kegiatan Mendatang</div><svg class="a" style="left:1234px;top:163px" width="18" height="18" viewBox="0 0 18 18"><path d="M14.2 6.2A6.3 6.3 0 1 0 15.1 10.5" fill="none" stroke="#111" stroke-width="2.1"/><path d="M15.6 2.2V7.4H10.4" fill="none" stroke="#111" stroke-width="2.1" stroke-linejoin="miter"/></svg><svg class="a" style="left:1262px;top:163px" width="8" height="18"><circle cx="4" cy="3.7" r="1.6" fill="#6e6e6e"/><circle cx="4" cy="9" r="1.6" fill="#6e6e6e"/><circle cx="4" cy="14.3" r="1.6" fill="#6e6e6e"/></svg>
<div class="card" style="left:1293px;top:158px;width:596px;height:292px"></div><div class="a" style="left:1304px;top:187px;width:574px;height:1px;background:#dcdcdc"></div><div class="a t" style="left:1310px;top:164.4px;font-size:15px;font-weight:bold;color:#333;">Tren Penjualan (Semua Cabang)</div><svg class="a" style="left:1842px;top:163px" width="18" height="18" viewBox="0 0 18 18"><path d="M14.2 6.2A6.3 6.3 0 1 0 15.1 10.5" fill="none" stroke="#111" stroke-width="2.1"/><path d="M15.6 2.2V7.4H10.4" fill="none" stroke="#111" stroke-width="2.1" stroke-linejoin="miter"/></svg><svg class="a" style="left:1870px;top:163px" width="8" height="18"><circle cx="4" cy="3.7" r="1.6" fill="#6e6e6e"/><circle cx="4" cy="9" r="1.6" fill="#6e6e6e"/><circle cx="4" cy="14.3" r="1.6" fill="#6e6e6e"/></svg>
<div class="card" style="left:78px;top:461px;width:596px;height:292px"></div><div class="a" style="left:89px;top:490px;width:574px;height:1px;background:#dcdcdc"></div><div class="a t" style="left:95px;top:467.4px;font-size:15px;font-weight:bold;color:#333;">Penjualan</div><svg class="a" style="left:627px;top:466px" width="18" height="18" viewBox="0 0 18 18"><path d="M14.2 6.2A6.3 6.3 0 1 0 15.1 10.5" fill="none" stroke="#111" stroke-width="2.1"/><path d="M15.6 2.2V7.4H10.4" fill="none" stroke="#111" stroke-width="2.1" stroke-linejoin="miter"/></svg><svg class="a" style="left:655px;top:466px" width="8" height="18"><circle cx="4" cy="3.7" r="1.6" fill="#6e6e6e"/><circle cx="4" cy="9" r="1.6" fill="#6e6e6e"/><circle cx="4" cy="14.3" r="1.6" fill="#6e6e6e"/></svg>
<div class="card" style="left:685px;top:461px;width:596px;height:292px"></div><div class="a" style="left:696px;top:490px;width:574px;height:1px;background:#dcdcdc"></div><svg class="a" style="left:1234px;top:466px" width="18" height="18" viewBox="0 0 18 18"><path d="M14.2 6.2A6.3 6.3 0 1 0 15.1 10.5" fill="none" stroke="#111" stroke-width="2.1"/><path d="M15.6 2.2V7.4H10.4" fill="none" stroke="#111" stroke-width="2.1" stroke-linejoin="miter"/></svg><svg class="a" style="left:1262px;top:466px" width="8" height="18"><circle cx="4" cy="3.7" r="1.6" fill="#6e6e6e"/><circle cx="4" cy="9" r="1.6" fill="#6e6e6e"/><circle cx="4" cy="14.3" r="1.6" fill="#6e6e6e"/></svg>
<div class="card" style="left:1293px;top:461px;width:596px;height:292px"></div><div class="a" style="left:1304px;top:490px;width:574px;height:1px;background:#dcdcdc"></div><div class="a t" style="left:1310px;top:467.4px;font-size:15px;font-weight:bold;color:#333;">Beban Perusahaan (Semua Cabang)</div><svg class="a" style="left:1842px;top:466px" width="18" height="18" viewBox="0 0 18 18"><path d="M14.2 6.2A6.3 6.3 0 1 0 15.1 10.5" fill="none" stroke="#111" stroke-width="2.1"/><path d="M15.6 2.2V7.4H10.4" fill="none" stroke="#111" stroke-width="2.1" stroke-linejoin="miter"/></svg><svg class="a" style="left:1870px;top:466px" width="8" height="18"><circle cx="4" cy="3.7" r="1.6" fill="#6e6e6e"/><circle cx="4" cy="9" r="1.6" fill="#6e6e6e"/><circle cx="4" cy="14.3" r="1.6" fill="#6e6e6e"/></svg>
<div class="card" style="left:78px;top:765px;width:899px;height:80px"></div><div class="a" style="left:89px;top:794px;width:877px;height:1px;background:#dcdcdc"></div><div class="a t" style="left:95px;top:771.4px;font-size:15px;font-weight:bold;color:#333;">Pembelian</div><svg class="a" style="left:930px;top:770px" width="18" height="18" viewBox="0 0 18 18"><path d="M14.2 6.2A6.3 6.3 0 1 0 15.1 10.5" fill="none" stroke="#111" stroke-width="2.1"/><path d="M15.6 2.2V7.4H10.4" fill="none" stroke="#111" stroke-width="2.1" stroke-linejoin="miter"/></svg><svg class="a" style="left:958px;top:770px" width="8" height="18"><circle cx="4" cy="3.7" r="1.6" fill="#6e6e6e"/><circle cx="4" cy="9" r="1.6" fill="#6e6e6e"/><circle cx="4" cy="14.3" r="1.6" fill="#6e6e6e"/></svg>
<div class="card" style="left:989px;top:765px;width:900px;height:80px"></div><div class="a" style="left:1000px;top:794px;width:878px;height:1px;background:#dcdcdc"></div><div class="a t" style="left:1006px;top:771.4px;font-size:15px;font-weight:bold;color:#333;">Pembelian (Semua Cabang)</div><svg class="a" style="left:1842px;top:770px" width="18" height="18" viewBox="0 0 18 18"><path d="M14.2 6.2A6.3 6.3 0 1 0 15.1 10.5" fill="none" stroke="#111" stroke-width="2.1"/><path d="M15.6 2.2V7.4H10.4" fill="none" stroke="#111" stroke-width="2.1" stroke-linejoin="miter"/></svg><svg class="a" style="left:1870px;top:770px" width="8" height="18"><circle cx="4" cy="3.7" r="1.6" fill="#6e6e6e"/><circle cx="4" cy="9" r="1.6" fill="#6e6e6e"/><circle cx="4" cy="14.3" r="1.6" fill="#6e6e6e"/></svg>
<div class="a" style="left:1907px;top:667px;width:5px;height:154px;background:#f7f7f7"></div>
<div class="a t" style="left:-174px;width:600px;text-align:center;top:202.1px;font-size:13px;color:#555;">Kemarin</div>
<div class="a t" style="left:-174px;width:600px;text-align:center;top:217.6px;font-size:38px;color:#444;">23</div>
<div class="a t" style="left:-174px;width:600px;text-align:center;top:258.3px;font-size:19px;color:#666;">Des</div>
<div class="a" style="left:185px;top:222px;width:1px;height:40px;background:#c8c8c8"></div>
<div class="a" style="left:180px;top:205px;width:11px;height:11px;border-radius:50%;background:#d6e8fb;border:1.3px solid #1f5fb0"></div>
<div class="a" style="left:180px;top:268px;width:11px;height:11px;border-radius:50%;background:#d6e8fb;border:1.3px solid #1f5fb0"></div>
<div class="a t" style="left:220px;top:201.8px;font-size:13.5px;font-weight:bold;color:#222;">15:31</div>
<div class="a t" style="left:220px;top:233.0px;font-size:14.4px;color:#555;">Buat Permintaan Barang PR.2025.12.00003</div>
<div class="a t" style="left:220px;top:264.8px;font-size:13.5px;font-weight:bold;color:#222;">15:30</div>
<div class="a" style="left:658px;top:189px;width:15px;height:89px;background:#fafafa"></div>
<svg class="a" style="left:660px;top:192px" width="12" height="10"><path d="M1.5 7.5L5.5 2.5L9.5 7.5Z" fill="#888" stroke="#888" stroke-width="1.2" stroke-linejoin="round"/></svg>
<div class="a" style="left:661px;top:206px;width:9px;height:31px;border-radius:4.5px;background:#8a8a8a"></div>
<div class="a t" style="left:435px;width:600px;text-align:center;top:202.1px;font-size:13px;color:#555;">Kamis</div>
<div class="a t" style="left:435px;width:600px;text-align:center;top:217.6px;font-size:38px;color:#444;">25</div>
<div class="a t" style="left:435px;width:600px;text-align:center;top:258.3px;font-size:19px;color:#666;">Des</div>
<div class="a" style="left:789.5px;top:204.5px;width:11px;height:11px;border-radius:50%;background:#7eea7a;border:1.3px solid #2f8f33"></div>
<div class="a t" style="left:831px;top:201.8px;font-size:14px;font-weight:bold;color:#222;">110102.2025.12.00001</div>
<div class="a t" style="left:831px;top:232.6px;font-size:14.8px;color:#555;">Jatuh Tempo Giro Masuk, Pelanggan A</div>
<div class="a" style="left:697px;top:291px;width:571px;height:1px;background:#e6e6e6"></div>
<svg class="a" style="left:1293px;top:158px" width="596" height="292" viewBox="1293 158 596 292"><path d="M1353 218H1873" stroke="#e6e6e6" stroke-width="1"/><path d="M1353 281.4H1873" stroke="#e6e6e6" stroke-width="1"/><path d="M1353 341.8H1873" stroke="#e6e6e6" stroke-width="1"/><path d="M1353 403.8H1873" stroke="#ccd6eb" stroke-width="1"/><path d="M1390 403.8L1612.9 403.8C1650 403.8 1655 237.2 1687.3 237.2C1719.6 237.2 1724.6 403.8 1761.7 403.8L1836.1 403.8" fill="none" stroke="#7cb5ec" stroke-width="2.2"/><circle cx="1390" cy="403.8" r="4.6" fill="#7cb5ec"/><circle cx="1464.5" cy="403.8" r="4.6" fill="#7cb5ec"/><circle cx="1538.5" cy="403.8" r="4.6" fill="#7cb5ec"/><circle cx="1612.9" cy="403.8" r="4.6" fill="#7cb5ec"/><circle cx="1687.3" cy="237.2" r="4.6" fill="#7cb5ec"/><circle cx="1761.7" cy="403.8" r="4.6" fill="#7cb5ec"/><circle cx="1836.1" cy="403.8" r="4.6" fill="#7cb5ec"/></svg>
<div class="a t" style="right:583px;text-align:right;top:213.5px;font-size:11.5px;color:#555;letter-spacing:.4px">15 jt</div>
<div class="a t" style="right:583px;text-align:right;top:275.4px;font-size:11.5px;color:#555;letter-spacing:.4px">10 jt</div>
<div class="a t" style="right:583px;text-align:right;top:335.4px;font-size:11.5px;color:#555;letter-spacing:.4px">5 jt</div>
<div class="a t" style="right:583px;text-align:right;top:397.4px;font-size:11.5px;color:#555;letter-spacing:.4px">0</div>
<div class="a t" style="left:1090px;width:600px;text-align:center;top:414.1px;font-size:12px;color:#555;letter-spacing:.4px">Kam</div>
<div class="a t" style="left:1164.5px;width:600px;text-align:center;top:414.1px;font-size:12px;color:#555;letter-spacing:.4px">Jum</div>
<div class="a t" style="left:1238.5px;width:600px;text-align:center;top:414.1px;font-size:12px;color:#555;letter-spacing:.4px">Sab</div>
<div class="a t" style="left:1312.9px;width:600px;text-align:center;top:414.1px;font-size:12px;color:#555;letter-spacing:.4px">Min</div>
<div class="a t" style="left:1387.3px;width:600px;text-align:center;top:414.1px;font-size:12px;color:#555;letter-spacing:.4px">Sen</div>
<div class="a t" style="left:1461.7px;width:600px;text-align:center;top:414.1px;font-size:12px;color:#555;letter-spacing:.4px">Kemarin</div>
<div class="a t" style="left:1536.1px;width:600px;text-align:center;top:414.1px;font-size:12px;color:#555;letter-spacing:.4px">Hari ini</div>
<div class="a t" style="right:46px;text-align:right;top:199.6px;font-size:11.5px;color:#333;letter-spacing:.3px">(Seminggu terakhir)</div>
<svg class="a" style="left:686px;top:461px" width="595" height="292" viewBox="686 461 595 292"><path d="M697 574.4H1266" stroke="#e6e6e6" stroke-width="1"/><path d="M697 640H1266" stroke="#e6e6e6" stroke-width="1"/><path d="M697 505H1266" stroke="#e6e6e6" stroke-width="1"/><path d="M697 707.7H1266" stroke="#ccd6eb" stroke-width="1"/><path d="M700 506.2H1229.7" stroke="#2aa6dc" stroke-width="2"/><circle cx="729" cy="506.2" r="4.8" fill="#12a2dc"/><circle cx="800.5" cy="506.2" r="4.8" fill="#12a2dc"/><circle cx="872" cy="506.2" r="4.8" fill="#12a2dc"/><circle cx="943.5" cy="506.2" r="4.8" fill="#12a2dc"/><circle cx="1014.9" cy="506.2" r="4.8" fill="#12a2dc"/><circle cx="1087" cy="506.2" r="4.8" fill="#12a2dc"/><circle cx="1158" cy="506.2" r="4.8" fill="#12a2dc"/><circle cx="1229.7" cy="506.2" r="4.8" fill="#12a2dc"/></svg>
<div class="a t" style="left:714.9px;width:600px;text-align:center;top:718.1px;font-size:12px;color:#555;letter-spacing:.5px">21 Des</div>
<div class="a t" style="left:787px;width:600px;text-align:center;top:718.1px;font-size:12px;color:#555;letter-spacing:.5px">22 Des</div>
<div class="a t" style="left:858px;width:600px;text-align:center;top:718.1px;font-size:12px;color:#555;letter-spacing:.5px">23 Des</div>
<div class="a t" style="left:929.7px;width:600px;text-align:center;top:718.1px;font-size:12px;color:#555;letter-spacing:.5px">24 Des</div>
<svg class="a" style="left:1745px;top:505px" width="8" height="11"><path d="M6 1.5L2.2 5.5L6 9.5" fill="none" stroke="#1ba1e2" stroke-width="2"/></svg>
<svg class="a" style="left:1864px;top:505px" width="8" height="11"><path d="M2 1.5L5.8 5.5L2 9.5" fill="none" stroke="#1ba1e2" stroke-width="2"/></svg>
<div class="a t" style="left:1508px;width:600px;text-align:center;top:504.7px;font-size:11px;color:#222;">1 Des - 24 Des 2025</div>
<div class="a" style="left:1323.2px;top:523.8px;width:100.4px;height:100.4px;border-radius:50%;border:12px solid #33dbb1"></div>
<svg class="a" style="left:1350px;top:567px" width="15" height="15" viewBox="0 0 15 15"><circle cx="7.5" cy="7.5" r="6.2" fill="none" stroke="#e8202a" stroke-width="1.6"/><path d="M7.5 11V4.5M4.8 7L7.5 4.3L10.2 7" fill="none" stroke="#e8202a" stroke-width="1.6"/></svg>
<div class="a t" style="left:1372px;top:562.1px;font-size:22px;color:#e8202a;">8x</div>
<div class="a t" style="left:1073px;width:600px;text-align:center;top:631.6px;font-size:11.5px;color:#333;">Dibanding 1 Nov - 30 Nov</div>
<div class="a t" style="left:1073px;width:600px;text-align:center;top:646.6px;font-size:11.5px;color:#333;">2025</div>
<div class="a t" style="left:1452px;top:532.9px;font-size:20.5px;font-weight:bold;color:#111;">Beban</div>
<div class="a t" style="right:45px;text-align:right;top:532.5px;font-size:21.5px;font-weight:bold;color:#111;">900.000</div>
<div class="a t" style="right:127px;text-align:right;top:538.4px;font-size:15px;color:#111;">Rp</div>
<div class="a" style="left:1452px;top:563px;width:422px;height:1px;background:#d0d0d0"></div>
<div class="a" style="left:1452.5px;top:574.5px;width:11px;height:11px;border-radius:50%;background:#3ccfa5;border:1px solid #555"></div>
<div class="a" style="left:1452.5px;top:602.5px;width:11px;height:11px;border-radius:50%;background:#f7ba2e;border:1px solid #555"></div>
<div class="a t" style="left:1470px;top:572.1px;font-size:14.3px;color:#222;">Beban Iklan</div>
<div class="a t" style="left:1470px;top:600.1px;font-size:14.3px;color:#222;">Beban Angkut Pembelian</div>
<div class="a t" style="right:164px;text-align:right;top:577.4px;font-size:9.5px;color:#888;">Rp</div>
<div class="a t" style="right:97px;text-align:right;top:572.3px;font-size:14px;font-weight:bold;color:#222;">1.000.000</div>
<div class="a t" style="right:159px;text-align:right;top:605.4px;font-size:9.5px;color:#888;">Rp</div>
<div class="a t" style="right:97px;text-align:right;top:600.3px;font-size:14px;font-weight:bold;color:#222;">-100.000</div>
<div class="a" style="left:1826.5px;top:570.5px;width:47.5px;height:17px;border-radius:8px;background:#fdd5d5;border:1px solid #f08a8a"></div>
<div class="a t" style="left:1550px;width:600px;text-align:center;top:573.0px;font-size:11px;color:#e02a2a;">90%</div>
<div class="a" style="left:1826.5px;top:599.5px;width:47.5px;height:17px;border-radius:8px;background:#fdd5d5;border:1px solid #f08a8a"></div>
<div class="a t" style="left:1550px;width:600px;text-align:center;top:602.0px;font-size:11px;color:#e02a2a;">100%</div>
<svg class="a" style="left:1299px;top:808px" width="8" height="11"><path d="M6 1.5L2.2 5.5L6 9.5" fill="none" stroke="#1ba1e2" stroke-width="2"/></svg>
<svg class="a" style="left:1419px;top:808px" width="8" height="11"><path d="M2 1.5L5.8 5.5L2 9.5" fill="none" stroke="#1ba1e2" stroke-width="2"/></svg>
<div class="a t" style="left:1063px;width:600px;text-align:center;top:808.5px;font-size:11px;color:#222;">1 Des - 24 Des 2025</div>
<div class="a t" style="right:46px;text-align:right;top:808.1px;font-size:11.5px;color:#222;">Hari ini</div>
<div class="a" style="left:965px;top:819.5px;width:954px;height:2px;background:#efefef"></div>
<div class="a" style="left:62px;top:278px;width:903px;height:560px;background:#fafafa;border-radius:7px 7px 0 0;box-shadow:0 0 20px 3px rgba(0,0,0,.16),10px 6px 30px -2px rgba(0,0,0,.25)"></div>
<div class="a t" style="left:75px;top:301.3px;font-size:26px;color:#505050;transform:scaleX(0.885);transform-origin:0 0">Persediaan</div>
<div class="a" style="left:74px;top:350px;width:878px;height:2px;background:#e6335e"></div>
<div class="tile g" style="left:74px;top:375px"><svg class="a" style="left:-1px;top:-1px" width="135" height="135" viewBox="0 0 135 135"><path d="M49.5 26.8H77.5L88.3 37.5V68Q88.3 70.4 85.9 70.4H49.8Q47.4 70.4 47.4 68V29.2Q47.4 26.8 49.5 26.8Z" fill="none" stroke="#5c8d0a" stroke-width="2.6" stroke-linejoin="round"/><path d="M77.5 26.8V34Q77.5 37 80.5 37H88.3" fill="none" stroke="#5c8d0a" stroke-width="2.6"/><rect x="52.6" y="31.6" width="17.800000000000004" height="17.6" rx="3.560000000000001" fill="none" stroke="#5c8d0a" stroke-width="2.6"/><path d="M58.474000000000004 31.6V38.992000000000004H64.52600000000001V31.6M57.940000000000005 44.272000000000006H61.856" fill="none" stroke="#5c8d0a" stroke-width="2.6" stroke-linecap="round"/><path d="M52 56.6H83.6M52 63.6H83.6" stroke="#5c8d0a" stroke-width="2.6" stroke-linecap="round"/></svg><div class="tl" style="top:83px">Permintaan</div><div class="tl" style="top:103px">Barang</div></div>
<div class="tile g" style="left:220.8px;top:375px"><svg class="a" style="left:-1px;top:-1px" width="135" height="135" viewBox="0 0 135 135"><path d="M48.6 45.5V31.5Q48.6 28.7 51.5 28.7H58Q61 28.7 62 31.5L68 45.5" fill="none" stroke="#5c8d0a" stroke-width="2.6"/><path d="M52 36V45M54 41.5L57.5 45.5M55 38.5L58.5 41" fill="none" stroke="#5c8d0a" stroke-width="2"/><rect x="46" y="45.5" width="24" height="12" rx="3" fill="none" stroke="#5c8d0a" stroke-width="2.6"/><circle cx="52.6" cy="57.5" r="3.2" fill="#dbfcd5" stroke="#5c8d0a" stroke-width="2.6"/><circle cx="67.2" cy="57.5" r="3.2" fill="#dbfcd5" stroke="#5c8d0a" stroke-width="2.6"/><path d="M71 28V56.5H82" fill="none" stroke="#5c8d0a" stroke-width="2.6"/><rect x="73" y="36.3" width="16" height="18.200000000000003" rx="3.2" fill="none" stroke="#5c8d0a" stroke-width="2.6"/><path d="M78.28 36.3V43.943999999999996H83.72V36.3M77.8 49.403999999999996H81.32" fill="none" stroke="#5c8d0a" stroke-width="2.6" stroke-linecap="round"/><path d="M50.5 65.5H85M45.6 70.3H89.3" stroke="#5c8d0a" stroke-width="2.6" stroke-linecap="round"/></svg><div class="tl" style="top:83px">Pemindahan</div><div class="tl" style="top:103px">Barang</div></div>
<div class="tile g" style="left:367px;top:375px"><svg class="a" style="left:-1px;top:-1px" width="135" height="135" viewBox="0 0 135 135"><rect x="55.8" y="27.3" width="33.5" height="43.1" rx="4.5" fill="none" stroke="#5c8d0a" stroke-width="2.6"/><path d="M55.8 52.8H50.5Q46.5 52.8 46.5 57V66Q46.5 70.4 50.5 70.4H56" fill="none" stroke="#5c8d0a" stroke-width="2.6"/><rect x="63.2" y="33.1" width="17.89999999999999" height="18.199999999999996" rx="3.5799999999999983" fill="none" stroke="#5c8d0a" stroke-width="2.6"/><path d="M69.107 33.1V40.744H75.193V33.1M68.57 46.20399999999999H72.508" fill="none" stroke="#5c8d0a" stroke-width="2.6" stroke-linecap="round"/><path d="M62.5 58.6H81.5M60 65H84.5" stroke="#5c8d0a" stroke-width="2.6" stroke-linecap="round"/></svg><div class="tl" style="top:83px">Penyesuaian</div><div class="tl" style="top:103px">Persediaan</div></div>
<div class="tile g" style="left:512.8px;top:375px"><svg class="a" style="left:-1px;top:-1px" width="135" height="135" viewBox="0 0 135 135"><path d="M80.2 48.5V38Q80.2 34.7 77 34.7H50Q46.2 34.7 46.2 38.5V67Q46.2 70.4 49.7 70.4H67" fill="none" stroke="#5c8d0a" stroke-width="2.6" stroke-linecap="round"/><rect x="57" y="32.4" width="15" height="5.5" rx="2.7" fill="#dbfcd5" stroke="#5c8d0a" stroke-width="2.6"/><path d="M60 32.4A4 4 0 0 1 68 32.4" fill="none" stroke="#5c8d0a" stroke-width="2.6"/><path d="M50.5 64H66.5" stroke="#5c8d0a" stroke-width="2.6" stroke-linecap="round"/><path d="M52.5 44A8 8 0 0 1 66.5 47.5M64.5 55.5A8 8 0 0 1 51 52" fill="none" stroke="#5c8d0a" stroke-width="1.7"/><path d="M65 45L67 48.5L69 45.5M52.5 54.5L50.5 51.5L49 54" fill="none" stroke="#5c8d0a" stroke-width="1.5"/><path d="M61.90 49.80 L63.18 50.23 L62.85 51.56 L61.14 51.90 L60.93 52.13 L61.53 53.34 L60.36 54.05 L58.91 53.09 L58.60 53.10 L58.17 54.38 L56.84 54.05 L56.50 52.34 L56.27 52.13 L55.06 52.73 L54.35 51.56 L55.31 50.11 L55.30 49.80 L54.02 49.37 L54.35 48.04 L56.06 47.70 L56.27 47.47 L55.67 46.26 L56.84 45.55 L58.29 46.51 L58.60 46.50 L59.03 45.22 L60.36 45.55 L60.70 47.26 L60.93 47.47 L62.14 46.87 L62.85 48.04 L61.89 49.49Z" fill="none" stroke="#5c8d0a" stroke-width="1.3" stroke-linejoin="round"/><circle cx="58.6" cy="49.8" r="1.4" fill="none" stroke="#5c8d0a" stroke-width="1.1"/><rect x="71.9" y="52.3" width="17.099999999999994" height="18.10000000000001" rx="3.419999999999999" fill="none" stroke="#5c8d0a" stroke-width="2.6"/><path d="M77.543 52.3V59.902H83.357V52.3M77.03 65.33200000000001H80.792" fill="none" stroke="#5c8d0a" stroke-width="2.6" stroke-linecap="round"/></svg><div class="tl" style="top:83px">Pekerjaan</div><div class="tl" style="top:103px">Pesanan</div></div>
<div class="tile g" style="left:659px;top:375px"><svg class="a" style="left:-1px;top:-1px" width="135" height="135" viewBox="0 0 135 135"><rect x="58.5" y="27.6" width="20.5" height="18.699999999999996" rx="4" fill="none" stroke="#5c8d0a" stroke-width="2.6"/><path d="M65.265 27.6V35.454H72.235V27.6M64.65 41.064H69.16" fill="none" stroke="#5c8d0a" stroke-width="2.6" stroke-linecap="round"/><rect x="45.9" y="49.5" width="19.9" height="20.900000000000006" rx="3.98" fill="none" stroke="#5c8d0a" stroke-width="2.6"/><path d="M52.467 49.5V58.278000000000006H59.233V49.5M51.87 64.548H56.248" fill="none" stroke="#5c8d0a" stroke-width="2.6" stroke-linecap="round"/><circle cx="78.5" cy="59.7" r="10.2" fill="#dbfcd5" stroke="#5c8d0a" stroke-width="2.6"/><path d="M78.5 53.5V66M72.2 59.7H84.8" stroke="#5c8d0a" stroke-width="2.6"/></svg><div class="tl" style="top:83px">Penambahan</div><div class="tl" style="top:103px">Bahan Baku</div></div>
<div class="tile g" style="left:806px;top:375px"><svg class="a" style="left:-1px;top:-1px" width="135" height="135" viewBox="0 0 135 135"><path d="M79.7 48.5V38Q79.7 34.7 76.5 34.7H49.5Q45.6 34.7 45.6 38.5V67Q45.6 70.4 49 70.4H66.5" fill="none" stroke="#5c8d0a" stroke-width="2.6" stroke-linecap="round"/><rect x="56.3" y="32.4" width="15" height="5.5" rx="2.7" fill="#dbfcd5" stroke="#5c8d0a" stroke-width="2.6"/><path d="M59.3 32.4A4 4 0 0 1 67.3 32.4" fill="none" stroke="#5c8d0a" stroke-width="2.6"/><path d="M50 64H66" stroke="#5c8d0a" stroke-width="2.6" stroke-linecap="round"/><circle cx="57.4" cy="50.4" r="8.3" fill="none" stroke="#5c8d0a" stroke-width="2.6"/><path d="M53.3 50.5L56.3 53.3L61.5 47.5" fill="none" stroke="#5c8d0a" stroke-width="2.6" stroke-linecap="round" stroke-linejoin="round"/><rect x="71.3" y="52.3" width="17.10000000000001" height="18.10000000000001" rx="3.4200000000000017" fill="none" stroke="#5c8d0a" stroke-width="2.6"/><path d="M76.943 52.3V59.902H82.757V52.3M76.43 65.33200000000001H80.19200000000001" fill="none" stroke="#5c8d0a" stroke-width="2.6" stroke-linecap="round"/></svg><div class="tl" style="top:83px">Penyelesaian</div><div class="tl" style="top:103px">Pesanan</div></div>
<div class="tile g" style="left:74px;top:521px"><svg class="a" style="left:-1px;top:-1px" width="135" height="135" viewBox="0 0 135 135"><path d="M83 40V31Q83 27.3 79 27.3H50Q46.3 27.3 46.3 31V66.5Q46.3 70.4 50 70.4H59.5" fill="none" stroke="#5c8d0a" stroke-width="2.6" stroke-linecap="round"/><rect x="52.1" y="32.7" width="18.199999999999996" height="18.599999999999994" rx="3.6399999999999992" fill="none" stroke="#5c8d0a" stroke-width="2.6"/><path d="M58.106 32.7V40.512H64.294V32.7M57.56 46.092H61.564" fill="none" stroke="#5c8d0a" stroke-width="2.6" stroke-linecap="round"/><path d="M52 58H64" stroke="#5c8d0a" stroke-width="2.6" stroke-linecap="round"/><path d="M65.6 63.5L82.5 46.6Q85.5 44 88.3 46.8Q90.8 49.6 88.3 52.4L71.3 69.4H66.6Q65.6 69.4 65.6 68.2Z" fill="none" stroke="#5c8d0a" stroke-width="2.6" stroke-linejoin="round"/><path d="M80.5 48.6L86.3 54.4" stroke="#5c8d0a" stroke-width="2.6"/></svg><div class="tl" style="top:83px">Perintah Stok</div><div class="tl" style="top:103px">Opname</div></div>
<div class="tile g" style="left:220.8px;top:521px"><svg class="a" style="left:-1px;top:-1px" width="135" height="135" viewBox="0 0 135 135"><path d="M82 44.5V31Q82 27.3 78 27.3H49.5Q45.7 27.3 45.7 31V66.5Q45.7 70.4 49.5 70.4H65.5" fill="none" stroke="#5c8d0a" stroke-width="2.6" stroke-linecap="round"/><rect x="51.7" y="32.7" width="18.200000000000003" height="18.599999999999994" rx="3.6400000000000006" fill="none" stroke="#5c8d0a" stroke-width="2.6"/><path d="M57.706 32.7V40.512H63.894000000000005V32.7M57.160000000000004 46.092H61.164" fill="none" stroke="#5c8d0a" stroke-width="2.6" stroke-linecap="round"/><path d="M51.5 58H63.5" stroke="#5c8d0a" stroke-width="2.6" stroke-linecap="round"/><circle cx="79.4" cy="60.8" r="9.7" fill="#dbfcd5" stroke="#5c8d0a" stroke-width="2.6"/><path d="M75 61L78.2 64L84 58" fill="none" stroke="#5c8d0a" stroke-width="2.6" stroke-linecap="round" stroke-linejoin="round"/></svg><div class="tl" style="top:83px">Hasil Stok</div><div class="tl" style="top:103px">Opname</div></div>
<div class="tile b" style="left:367px;top:521px"><svg class="a" style="left:-1px;top:-1px" width="135" height="135" viewBox="0 0 135 135"><rect x="46.5" y="45.4" width="24.200000000000003" height="25.000000000000007" rx="4" fill="none" stroke="#0f69a9" stroke-width="2.6"/><path d="M54.1 45.4V55.9H63.1V45.4M53.76 63.400000000000006H59.084" fill="none" stroke="#0f69a9" stroke-width="2.6" stroke-linecap="round"/><path d="M63.5 42A12.8 12.8 0 1 1 77 52.8" fill="none" stroke="#0f69a9" stroke-width="2.6" stroke-linecap="round"/><path d="M83.00 40.00 L85.16 40.77 L84.58 43.14 L81.62 43.82 L81.24 44.24 L82.23 46.32 L80.14 47.58 L77.56 45.97 L77.00 46.00 L76.23 48.16 L73.86 47.58 L73.18 44.62 L72.76 44.24 L70.68 45.23 L69.42 43.14 L71.03 40.56 L71.00 40.00 L68.84 39.23 L69.42 36.86 L72.38 36.18 L72.76 35.76 L71.77 33.68 L73.86 32.42 L76.44 34.03 L77.00 34.00 L77.77 31.84 L80.14 32.42 L80.82 35.38 L81.24 35.76 L83.32 34.77 L84.58 36.86 L82.97 39.44Z" fill="none" stroke="#0f69a9" stroke-width="2.2" stroke-linejoin="round"/><circle cx="77" cy="40" r="2.6" fill="none" stroke="#0f69a9" stroke-width="2.2"/></svg><div class="tl" style="top:103px">Barang &amp; Jasa</div></div>
<div class="tile b" style="left:512.8px;top:521px"><svg class="a" style="left:-1px;top:-1px" width="135" height="135" viewBox="0 0 135 135"><path d="M46.2 42V68.5Q46.2 70.4 48 70.4H87Q89 70.4 89 68.5V42L67.6 27.2Z" fill="none" stroke="#0f69a9" stroke-width="2.6" stroke-linejoin="round"/><path d="M56.1 70.4V48.9H79.2V70.4M56.1 55.4H79.2M56.1 62.9H79.2" fill="none" stroke="#0f69a9" stroke-width="2.6"/></svg><div class="tl" style="top:103px">Gudang</div></div>
<div class="tile b" style="left:659px;top:521px"><svg class="a" style="left:-1px;top:-1px" width="135" height="135" viewBox="0 0 135 135"><circle cx="67.4" cy="31.8" r="5.3" fill="none" stroke="#0f69a9" stroke-width="2.6"/><path d="M55.5 37.4H79.8Q81.6 37.4 82.2 39.4L89.7 67Q90.3 70.3 87.5 70.3H47.5Q44.7 70.3 45.3 67L52.9 39.4Q53.5 37.4 55.5 37.4Z" fill="none" stroke="#0f69a9" stroke-width="2.6" stroke-linejoin="round"/><text x="68" y="61.3" text-anchor="middle" font-family="Liberation Sans" font-weight="bold" font-size="16" fill="#0f69a9">KG</text></svg><div class="tl" style="top:103px">Satuan Barang</div></div>
<div class="tile b" style="left:806px;top:521px"><svg class="a" style="left:-1px;top:-1px" width="135" height="135" viewBox="0 0 135 135"><rect x="49.1" y="26.8" width="11.4" height="10.3" rx="2.2" fill="#fff" stroke="#0f69a9" stroke-width="1.8"/><path d="M52.8 26.8V30.3H56.8V26.8M52.5 33.8H55" fill="none" stroke="#0f69a9" stroke-width="1"/><rect x="67.7" y="26.8" width="17" height="10.3" rx="2" fill="#fff" stroke="#0f69a9" stroke-width="2.6"/><text x="76.2" y="34.8" text-anchor="middle" font-family="Liberation Sans" font-weight="bold" font-size="7" fill="#0f69a9">A</text><rect x="49.1" y="43.7" width="11.4" height="10.3" rx="2.2" fill="#fff" stroke="#0f69a9" stroke-width="1.8"/><path d="M52.8 43.7V47.2H56.8V43.7M52.5 50.7H55" fill="none" stroke="#0f69a9" stroke-width="1"/><rect x="67.7" y="43.7" width="17" height="10.3" rx="2" fill="#fff" stroke="#0f69a9" stroke-width="2.6"/><text x="76.2" y="51.7" text-anchor="middle" font-family="Liberation Sans" font-weight="bold" font-size="7" fill="#0f69a9">B</text><rect x="49.1" y="60.7" width="11.4" height="10.3" rx="2.2" fill="#fff" stroke="#0f69a9" stroke-width="1.8"/><path d="M52.8 60.7V64.2H56.8V60.7M52.5 67.7H55" fill="none" stroke="#0f69a9" stroke-width="1"/><rect x="67.7" y="60.7" width="17" height="10.3" rx="2" fill="#fff" stroke="#0f69a9" stroke-width="2.6"/><text x="76.2" y="68.7" text-anchor="middle" font-family="Liberation Sans" font-weight="bold" font-size="7" fill="#0f69a9">C</text></svg><div class="tl" style="top:103px">Kategori Barang</div></div>
<div class="tile b" style="left:74px;top:667px"><svg class="a" style="left:-1px;top:-1px" width="135" height="135" viewBox="0 0 135 135"><path d="M55.7 70.4H49Q45.8 70.4 45.8 67V31Q45.8 27.3 49.5 27.3H85.8Q89.4 27.3 89.4 31V67Q89.4 70.4 86 70.4H81.4" fill="none" stroke="#0f69a9" stroke-width="2.6" stroke-linecap="round"/><path d="M55.6 27.3V36.5L61.5 33.5L67.4 36.5V27.3" fill="none" stroke="#0f69a9" stroke-width="2.6" stroke-linejoin="round"/><path d="M49.5 38.9H55M79 38.9H84.5" stroke="#0f69a9" stroke-width="2.6" stroke-linecap="round"/><path d="M81.80 56.20 L81.59 56.81 L81.03 57.37 L80.31 57.86 L79.67 58.31 L79.32 58.78 L79.34 59.32 L79.65 59.97 L80.10 60.71 L80.43 61.47 L80.46 62.15 L80.12 62.66 L79.43 62.98 L78.58 63.13 L77.77 63.25 L77.17 63.47 L76.87 63.89 L76.82 64.56 L76.89 65.39 L76.91 66.25 L76.72 66.95 L76.26 67.36 L75.56 67.43 L74.74 67.24 L73.93 66.98 L73.24 66.85 L72.74 67.00 L72.38 67.49 L72.08 68.24 L71.75 69.04 L71.31 69.68 L70.75 69.96 L70.10 69.83 L69.43 69.37 L68.80 68.78 L68.23 68.29 L67.70 68.10 L67.17 68.29 L66.60 68.78 L65.97 69.37 L65.30 69.83 L64.65 69.96 L64.09 69.68 L63.65 69.04 L63.32 68.24 L63.02 67.49 L62.66 67.00 L62.16 66.85 L61.48 66.98 L60.66 67.24 L59.84 67.43 L59.14 67.36 L58.68 66.95 L58.49 66.25 L58.51 65.39 L58.58 64.56 L58.53 63.89 L58.23 63.47 L57.63 63.25 L56.82 63.13 L55.97 62.98 L55.28 62.66 L54.94 62.15 L54.97 61.47 L55.30 60.71 L55.75 59.97 L56.06 59.32 L56.08 58.78 L55.73 58.31 L55.09 57.86 L54.37 57.37 L53.81 56.81 L53.60 56.20 L53.81 55.59 L54.37 55.03 L55.09 54.54 L55.73 54.09 L56.08 53.62 L56.06 53.08 L55.75 52.43 L55.30 51.69 L54.97 50.93 L54.94 50.25 L55.28 49.74 L55.97 49.43 L56.82 49.27 L57.63 49.15 L58.23 48.93 L58.53 48.51 L58.58 47.84 L58.51 47.01 L58.49 46.15 L58.68 45.45 L59.14 45.04 L59.84 44.97 L60.66 45.16 L61.47 45.42 L62.16 45.55 L62.66 45.40 L63.02 44.91 L63.32 44.16 L63.65 43.36 L64.09 42.72 L64.65 42.44 L65.30 42.57 L65.97 43.03 L66.60 43.62 L67.17 44.11 L67.70 44.30 L68.23 44.11 L68.80 43.62 L69.43 43.03 L70.10 42.57 L70.75 42.44 L71.31 42.72 L71.75 43.36 L72.08 44.16 L72.38 44.91 L72.74 45.40 L73.24 45.55 L73.92 45.42 L74.74 45.16 L75.56 44.97 L76.26 45.04 L76.72 45.45 L76.91 46.15 L76.89 47.01 L76.82 47.84 L76.87 48.51 L77.17 48.93 L77.77 49.15 L78.58 49.27 L79.43 49.43 L80.12 49.74 L80.46 50.25 L80.43 50.93 L80.10 51.69 L79.65 52.43 L79.34 53.08 L79.32 53.62 L79.67 54.09 L80.31 54.54 L81.03 55.03 L81.59 55.59Z" fill="none" stroke="#0f69a9" stroke-width="2.6" stroke-linejoin="round"/><path d="M60 51A9 9 0 0 1 75.5 51.5M75.5 61A9 9 0 0 1 60 61" fill="none" stroke="#0f69a9" stroke-width="2.2" stroke-linecap="round"/><path d="M67.7 52.8L69 55.4L71.8 55.6L69.6 57.4L70.3 60.2L67.7 58.6L65.1 60.2L65.8 57.4L63.6 55.6L66.4 55.4Z" fill="none" stroke="#0f69a9" stroke-width="1.6" stroke-linejoin="round"/></svg><div class="tl" style="top:103px">Merek Barang</div></div>
<div class="tile p" style="left:220.8px;top:667px"><svg class="a" style="left:-1px;top:-1px" width="135" height="135" viewBox="0 0 135 135"><path d="M82 44.5V31Q82 27.3 78 27.3H49.5Q45.7 27.3 45.7 31V66.5Q45.7 70.4 49.5 70.4H64.5" fill="none" stroke="#570d9c" stroke-width="2.6" stroke-linecap="round"/><rect x="51.7" y="32.7" width="18.200000000000003" height="18.599999999999994" rx="3.6400000000000006" fill="none" stroke="#570d9c" stroke-width="2.6"/><path d="M57.706 32.7V40.512H63.894000000000005V32.7M57.160000000000004 46.092H61.164" fill="none" stroke="#570d9c" stroke-width="2.6" stroke-linecap="round"/><path d="M51.5 58H63.5" stroke="#570d9c" stroke-width="2.6" stroke-linecap="round"/><circle cx="78.6" cy="59.5" r="8" fill="none" stroke="#570d9c" stroke-width="2.6"/><path d="M84.3 65.3L89.5 70.7" stroke="#570d9c" stroke-width="2.6" stroke-linecap="round"/></svg><div class="tl" style="top:83px">Pemenuhan</div><div class="tl" style="top:103px">Pesanan</div></div>
<div class="tile p" style="left:367px;top:667px"><svg class="a" style="left:-1px;top:-1px" width="135" height="135" viewBox="0 0 135 135"><path d="M46 42L68.4 27.3L90 42" fill="none" stroke="#570d9c" stroke-width="2.6" stroke-linecap="round" stroke-linejoin="round"/><path d="M51.5 40V70.4H85.5V40" fill="none" stroke="#570d9c" stroke-width="2.6"/><path d="M60.2 41.6H76.6" stroke="#570d9c" stroke-width="2.6" stroke-linecap="round"/><path d="M58.2 70.4V52.8H79V70.4" fill="none" stroke="#570d9c" stroke-width="2.6"/><path d="M66 56.5H71V61.2H66ZM62.2 62.5H67.2V68H62.2ZM69.5 62.5H74.7V68H69.5Z" fill="#570d9c"/></svg><div class="tl" style="top:83px">Barang per</div><div class="tl" style="top:103px">Gudang</div></div>
<div class="tile p" style="left:512.8px;top:667px"><svg class="a" style="left:-1px;top:-1px" width="135" height="135" viewBox="0 0 135 135"><path d="M49.6 43.6A17.8 17.8 0 0 1 85.2 43.6" fill="none" stroke="#570d9c" stroke-width="2.6" stroke-linecap="round"/><path d="M73.9 38.6A5.2 5.2 0 0 0 63.5 38.6V47" fill="none" stroke="#570d9c" stroke-width="2.6" stroke-linecap="round"/><path d="M60.5 44L63.5 47.5L66.5 44" fill="none" stroke="#570d9c" stroke-width="2.6" stroke-linecap="round" stroke-linejoin="round"/><path d="M50 55.8V70.4H85V55.8M67.3 49.3V70.4M45.8 55.8H89.6L85.5 49.3H49.6Z" fill="none" stroke="#570d9c" stroke-width="2.6" stroke-linejoin="round"/><path d="M71.7 55.8L67.3 49.3L62.9 55.8" fill="none" stroke="#570d9c" stroke-width="2.6" stroke-linejoin="round"/><path d="M72.3 65.4H80.5" stroke="#570d9c" stroke-width="2.6" stroke-linecap="round"/></svg><div class="tl" style="top:83px">Barang Stok</div><div class="tl" style="top:103px">Minimum</div></div>
<div class="a" style="left:645px;top:362px;width:164px;height:161px;border:5px solid #ed1c24"></div>
</body></html>
